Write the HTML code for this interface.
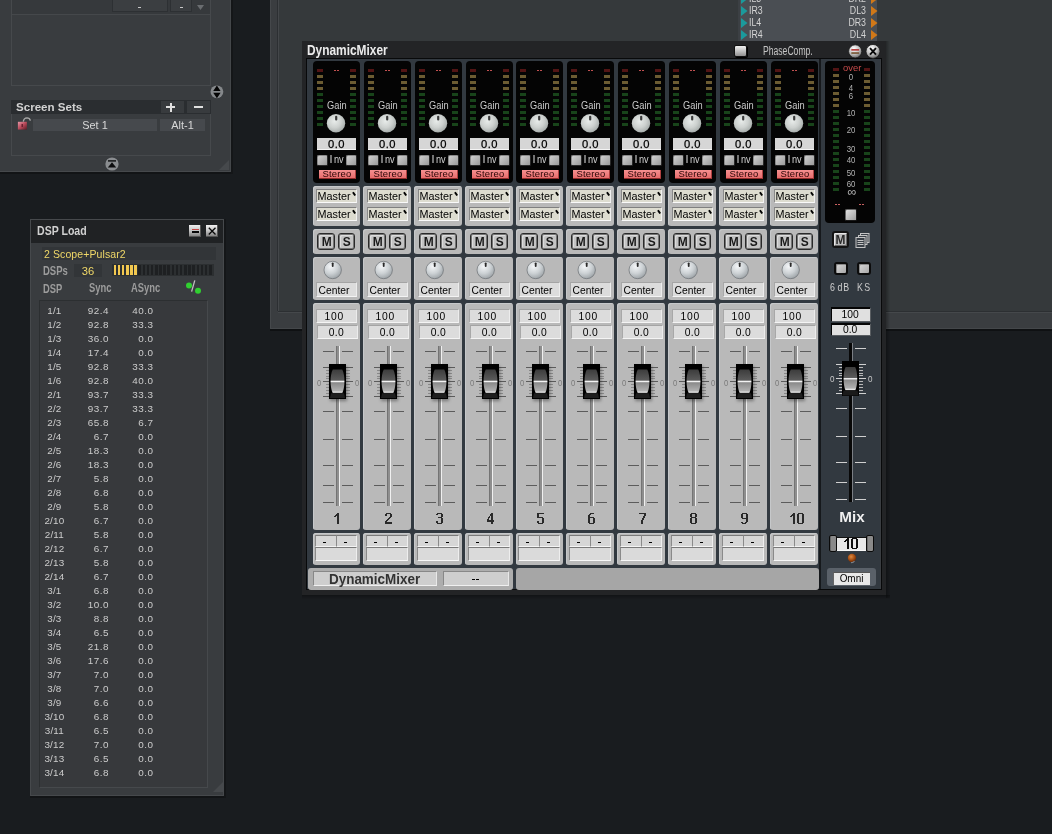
<!DOCTYPE html><html><head><meta charset="utf-8"><style>
*{margin:0;padding:0;box-sizing:border-box}
html,body{width:1052px;height:834px;overflow:hidden;background:#191c1f;font-family:"Liberation Sans",sans-serif}
div{position:absolute}
.t{white-space:nowrap;line-height:1}
</style></head><body><div style="left:0;top:0;width:1052px;height:834px;will-change:transform;overflow:hidden">
<div style="left:270px;top:0px;width:782px;height:330px;background:#35393b;"></div>
<div style="left:270px;top:0px;width:8px;height:329px;background:#3a3d40;"></div>
<div style="left:270px;top:0px;width:1px;height:329px;background:#45484b;"></div>
<div style="left:277px;top:0px;width:1px;height:311px;background:#2c2f32;"></div>
<div style="left:278px;top:0px;width:1px;height:312px;background:#44474a;"></div>
<div style="left:278px;top:311px;width:774px;height:1px;background:#2c2f32;"></div>
<div style="left:278px;top:312px;width:774px;height:1px;background:#45484b;"></div>
<div style="left:271px;top:313px;width:781px;height:15px;background:#3a3d40;"></div>
<div style="left:270px;top:328px;width:782px;height:1px;background:#44474a;"></div>
<div style="left:270px;top:329px;width:782px;height:2px;background:#0f1113;"></div>
<div style="left:738px;top:0px;width:139px;height:41px;background:#4a4e53;"></div>
<div style="left:738px;top:0px;width:2px;height:41px;background:#3c4044;"></div>
<svg style="position:absolute;left:740.5px;top:-6.35px;overflow:visible" width="7" height="10"><path d="M0 0 L6.5 5 L0 10Z" fill="#1b9a9c"/></svg>
<svg style="position:absolute;left:870.5px;top:-6.35px;overflow:visible" width="7" height="10"><path d="M0 0 L6.5 5 L0 10Z" fill="#d07818"/></svg>
<div class="t" style="left:748.5px;top:-6.00px;font-size:10px;color:#d4d4d4;transform:scaleX(0.88);transform-origin:left 50%;">IL3</div>
<div class="t" style="left:826px;top:-6.00px;font-size:10px;color:#d4d4d4;width:40px;text-align:right;transform:scaleX(0.88);transform-origin:right 50%;">DR2</div>
<svg style="position:absolute;left:740.5px;top:5.65px;overflow:visible" width="7" height="10"><path d="M0 0 L6.5 5 L0 10Z" fill="#1b9a9c"/></svg>
<svg style="position:absolute;left:870.5px;top:5.65px;overflow:visible" width="7" height="10"><path d="M0 0 L6.5 5 L0 10Z" fill="#d07818"/></svg>
<div class="t" style="left:748.5px;top:6.00px;font-size:10px;color:#d4d4d4;transform:scaleX(0.88);transform-origin:left 50%;">IR3</div>
<div class="t" style="left:826px;top:6.00px;font-size:10px;color:#d4d4d4;width:40px;text-align:right;transform:scaleX(0.88);transform-origin:right 50%;">DL3</div>
<svg style="position:absolute;left:740.5px;top:17.65px;overflow:visible" width="7" height="10"><path d="M0 0 L6.5 5 L0 10Z" fill="#1b9a9c"/></svg>
<svg style="position:absolute;left:870.5px;top:17.65px;overflow:visible" width="7" height="10"><path d="M0 0 L6.5 5 L0 10Z" fill="#d07818"/></svg>
<div class="t" style="left:748.5px;top:18.00px;font-size:10px;color:#d4d4d4;transform:scaleX(0.88);transform-origin:left 50%;">IL4</div>
<div class="t" style="left:826px;top:18.00px;font-size:10px;color:#d4d4d4;width:40px;text-align:right;transform:scaleX(0.88);transform-origin:right 50%;">DR3</div>
<svg style="position:absolute;left:740.5px;top:29.65px;overflow:visible" width="7" height="10"><path d="M0 0 L6.5 5 L0 10Z" fill="#1b9a9c"/></svg>
<svg style="position:absolute;left:870.5px;top:29.65px;overflow:visible" width="7" height="10"><path d="M0 0 L6.5 5 L0 10Z" fill="#d07818"/></svg>
<div class="t" style="left:748.5px;top:30.00px;font-size:10px;color:#d4d4d4;transform:scaleX(0.88);transform-origin:left 50%;">IR4</div>
<div class="t" style="left:826px;top:30.00px;font-size:10px;color:#d4d4d4;width:40px;text-align:right;transform:scaleX(0.88);transform-origin:right 50%;">DL4</div>
<div style="left:0px;top:0px;width:231px;height:172px;background:#393c3f;"></div>
<div style="left:0px;top:171px;width:231px;height:1px;background:#46494c;"></div>
<div style="left:230px;top:0px;width:1px;height:172px;background:#44474a;"></div>
<div style="left:0px;top:172px;width:233px;height:2px;background:#121416;"></div>
<div style="left:231px;top:0px;width:2px;height:174px;background:#141618;"></div>
<div style="left:11px;top:0px;width:1px;height:86px;background:#46494c;"></div>
<div style="left:210px;top:0px;width:1px;height:86px;background:#46494c;"></div>
<div style="left:11px;top:85px;width:200px;height:1px;background:#46494c;"></div>
<div style="left:12px;top:14px;width:198px;height:1px;background:#45484b;"></div>
<div style="left:12px;top:0px;width:198px;height:14px;background:#36393c;"></div>
<div style="left:112px;top:0px;width:56px;height:12px;background:#3b3e41;border:1px solid #2d3033;border-top:none;"></div>
<div style="left:138px;top:7px;width:3px;height:1px;background:#c8c8c8;"></div>
<div style="left:170px;top:0px;width:22px;height:12px;background:#3b3e41;border:1px solid #2d3033;border-top:none;"></div>
<div style="left:180px;top:7px;width:3px;height:1px;background:#c8c8c8;"></div>
<svg style="position:absolute;left:197px;top:5px;overflow:visible" width="8" height="5"><path d="M0 0 L7 0 L3.5 5Z" fill="#6a6d70"/></svg>
<svg style="position:absolute;left:210px;top:85px;overflow:visible" width="14" height="14"><circle cx="6.9" cy="6.8" r="6.4" fill="#85888b"/><path d="M3.2 5.9 L6.9 0.6 L10.6 5.9Z M3.2 7.7 L6.9 13.2 L10.6 7.7Z" fill="#050505"/></svg>
<div style="left:11px;top:100px;width:200px;height:14px;background:#2a2d30;"></div>
<div class="t" style="left:15.8px;top:102.00px;font-size:11.8px;color:#d2d2d2;font-weight:bold;transform:scaleX(0.98);transform-origin:left 50%;">Screen Sets</div>
<div style="left:161px;top:101px;width:23px;height:12px;background:#383b3e;"></div>
<div style="left:166px;top:106px;width:9px;height:2px;background:#e0e0e0;"></div>
<div style="left:169.5px;top:102.5px;width:2px;height:9px;background:#e0e0e0;"></div>
<div style="left:187px;top:101px;width:23px;height:12px;background:#383b3e;"></div>
<div style="left:194px;top:106px;width:9px;height:2px;background:#e0e0e0;"></div>
<div style="left:11px;top:114px;width:1px;height:42px;background:#46494c;"></div>
<div style="left:210px;top:114px;width:1px;height:42px;background:#46494c;"></div>
<div style="left:11px;top:155px;width:200px;height:1px;background:#46494c;"></div>
<div style="left:33px;top:119px;width:124px;height:12px;background:#46494d;"></div>
<div class="t" style="left:33px;top:120.00px;font-size:10.9px;color:#d8d8d8;width:124px;text-align:center;">Set 1</div>
<div style="left:160px;top:119px;width:45px;height:12px;background:#46494d;"></div>
<div class="t" style="left:160px;top:120.00px;font-size:10.9px;color:#d8d8d8;width:45px;text-align:center;">Alt-1</div>
<svg style="position:absolute;left:17px;top:116px;overflow:visible" width="15" height="15"><defs><linearGradient id="lk" x1="0" y1="0" x2="1" y2="1"><stop offset="0" stop-color="#e898a8"/><stop offset="0.5" stop-color="#b84a5a"/><stop offset="1" stop-color="#5a1a24"/></linearGradient></defs><path d="M6.3 5.6 Q6.8 2 10 1.9 Q12.6 2 13.4 4.6" fill="none" stroke="#a8a8a8" stroke-width="1.4"/><rect x="0.9" y="5.8" width="9" height="7.8" fill="url(#lk)"/><rect x="4.5" y="8" width="1.5" height="3" fill="#6a2030"/></svg>
<svg style="position:absolute;left:105px;top:157px;overflow:visible" width="14" height="14"><circle cx="7" cy="7" r="6.6" fill="#8a8d90"/><rect x="3" y="3.2" width="8" height="1.4" fill="#0c0d0e"/><path d="M2.8 10.5 L7 5.3 L11.2 10.5Z" fill="#0c0d0e"/></svg>
<svg style="position:absolute;left:219px;top:160px;overflow:visible" width="11" height="11"><path d="M10 0 L10 10 L0 10Z" fill="#46494c"/></svg>
<div style="left:30px;top:219px;width:194px;height:577px;background:#393c3f;border:1px solid #46494c;"></div>
<div style="left:31px;top:220px;width:192px;height:23px;background:#202224;"></div>
<div class="t" style="left:37.3px;top:225.00px;font-size:12px;color:#d0d0d0;font-weight:bold;transform:scaleX(0.88);transform-origin:left 50%;">DSP Load</div>
<div style="left:189px;top:225px;width:12.3px;height:12.3px;background:linear-gradient(#f0f0f0,#c8c8c8 45%,#7a7a7a);box-shadow:inset -1px -1px 0 #555;"></div>
<div style="left:192px;top:229px;width:7px;height:1.3px;background:#c84848;"></div>
<div style="left:192px;top:231.3px;width:7px;height:1.7px;background:#080808;"></div>
<div style="left:206px;top:225px;width:12.3px;height:12.3px;background:linear-gradient(#f0f0f0,#c8c8c8 45%,#7a7a7a);box-shadow:inset -1px -1px 0 #555;"></div>
<svg style="position:absolute;left:206px;top:225px;overflow:visible" width="13" height="12"><path d="M2.8 2.8 L9.5 9.5 M9.5 2.8 L2.8 9.5" stroke="#080808" stroke-width="1.3"/></svg>
<div style="left:42px;top:247px;width:174px;height:13px;background:#323538;"></div>
<div class="t" style="left:44.3px;top:249.00px;font-size:11.2px;color:#f0d868;transform:scaleX(0.94);transform-origin:left 50%;letter-spacing:0.1px;">2 Scope+Pulsar2</div>
<div class="t" style="left:42.7px;top:265.00px;font-size:12.2px;color:#9c9c9c;font-weight:bold;transform:scaleX(0.78);transform-origin:left 50%;">DSPs</div>
<div style="left:74px;top:264px;width:28px;height:13px;background:#323538;"></div>
<div class="t" style="left:74px;top:266.00px;font-size:11.2px;color:#f0d868;width:28px;text-align:center;">36</div>
<div style="left:112px;top:264px;width:102px;height:12px;background:#2c2f31;"></div>
<div style="left:113.5px;top:265px;width:2.6px;height:10px;background:#f2c850;"></div>
<div style="left:117.65px;top:265px;width:2.6px;height:10px;background:#f2c850;"></div>
<div style="left:121.8px;top:265px;width:2.6px;height:10px;background:#f2c850;"></div>
<div style="left:125.95px;top:265px;width:2.6px;height:10px;background:#f2c850;"></div>
<div style="left:130.1px;top:265px;width:2.6px;height:10px;background:#f2c850;"></div>
<div style="left:134.25px;top:265px;width:2.6px;height:10px;background:#f2c850;"></div>
<div style="left:138.4px;top:265px;width:2.6px;height:10px;background:#1e2022;"></div>
<div style="left:142.55px;top:265px;width:2.6px;height:10px;background:#1e2022;"></div>
<div style="left:146.7px;top:265px;width:2.6px;height:10px;background:#1e2022;"></div>
<div style="left:150.85px;top:265px;width:2.6px;height:10px;background:#1e2022;"></div>
<div style="left:155.0px;top:265px;width:2.6px;height:10px;background:#1e2022;"></div>
<div style="left:159.15px;top:265px;width:2.6px;height:10px;background:#1e2022;"></div>
<div style="left:163.3px;top:265px;width:2.6px;height:10px;background:#1e2022;"></div>
<div style="left:167.45px;top:265px;width:2.6px;height:10px;background:#1e2022;"></div>
<div style="left:171.60000000000002px;top:265px;width:2.6px;height:10px;background:#1e2022;"></div>
<div style="left:175.75px;top:265px;width:2.6px;height:10px;background:#1e2022;"></div>
<div style="left:179.9px;top:265px;width:2.6px;height:10px;background:#1e2022;"></div>
<div style="left:184.05px;top:265px;width:2.6px;height:10px;background:#1e2022;"></div>
<div style="left:188.2px;top:265px;width:2.6px;height:10px;background:#1e2022;"></div>
<div style="left:192.35000000000002px;top:265px;width:2.6px;height:10px;background:#1e2022;"></div>
<div style="left:196.5px;top:265px;width:2.6px;height:10px;background:#1e2022;"></div>
<div style="left:200.65px;top:265px;width:2.6px;height:10px;background:#1e2022;"></div>
<div style="left:204.8px;top:265px;width:2.6px;height:10px;background:#1e2022;"></div>
<div style="left:208.95px;top:265px;width:2.6px;height:10px;background:#1e2022;"></div>
<div class="t" style="left:42.7px;top:283.00px;font-size:12px;color:#9c9c9c;font-weight:bold;transform:scaleX(0.78);transform-origin:left 50%;">DSP</div>
<div class="t" style="left:88.8px;top:282.00px;font-size:12px;color:#9c9c9c;font-weight:bold;transform:scaleX(0.78);transform-origin:left 50%;">Sync</div>
<div class="t" style="left:131px;top:282.00px;font-size:12px;color:#9c9c9c;font-weight:bold;transform:scaleX(0.78);transform-origin:left 50%;">ASync</div>
<svg style="position:absolute;left:184px;top:278px;overflow:visible" width="18" height="16"><circle cx="5" cy="7.5" r="3" fill="#30d030"/><circle cx="14" cy="12.7" r="3" fill="#30d030"/><path d="M7.6 13.6 L10.8 2.4" stroke="#c0c0c0" stroke-width="1.3"/></svg>
<div style="left:39px;top:300px;width:169px;height:488px;background:#37393c;border:1px solid #2c2f31;border-right-color:#46494c;border-bottom-color:#46494c;"></div>
<div class="t" style="left:38.4px;top:306.00px;font-size:9.9px;color:#cccccc;width:32px;text-align:center;letter-spacing:0.2px;">1/1</div>
<div class="t" style="left:60px;top:306.00px;font-size:9.9px;color:#cccccc;width:49px;text-align:right;letter-spacing:0.5px;">92.4</div>
<div class="t" style="left:104px;top:306.00px;font-size:9.9px;color:#cccccc;width:49.5px;text-align:right;letter-spacing:0.5px;">40.0</div>
<div class="t" style="left:38.4px;top:320.00px;font-size:9.9px;color:#cccccc;width:32px;text-align:center;letter-spacing:0.2px;">1/2</div>
<div class="t" style="left:60px;top:320.00px;font-size:9.9px;color:#cccccc;width:49px;text-align:right;letter-spacing:0.5px;">92.8</div>
<div class="t" style="left:104px;top:320.00px;font-size:9.9px;color:#cccccc;width:49.5px;text-align:right;letter-spacing:0.5px;">33.3</div>
<div class="t" style="left:38.4px;top:334.00px;font-size:9.9px;color:#cccccc;width:32px;text-align:center;letter-spacing:0.2px;">1/3</div>
<div class="t" style="left:60px;top:334.00px;font-size:9.9px;color:#cccccc;width:49px;text-align:right;letter-spacing:0.5px;">36.0</div>
<div class="t" style="left:104px;top:334.00px;font-size:9.9px;color:#cccccc;width:49.5px;text-align:right;letter-spacing:0.5px;">0.0</div>
<div class="t" style="left:38.4px;top:348.00px;font-size:9.9px;color:#cccccc;width:32px;text-align:center;letter-spacing:0.2px;">1/4</div>
<div class="t" style="left:60px;top:348.00px;font-size:9.9px;color:#cccccc;width:49px;text-align:right;letter-spacing:0.5px;">17.4</div>
<div class="t" style="left:104px;top:348.00px;font-size:9.9px;color:#cccccc;width:49.5px;text-align:right;letter-spacing:0.5px;">0.0</div>
<div class="t" style="left:38.4px;top:362.00px;font-size:9.9px;color:#cccccc;width:32px;text-align:center;letter-spacing:0.2px;">1/5</div>
<div class="t" style="left:60px;top:362.00px;font-size:9.9px;color:#cccccc;width:49px;text-align:right;letter-spacing:0.5px;">92.8</div>
<div class="t" style="left:104px;top:362.00px;font-size:9.9px;color:#cccccc;width:49.5px;text-align:right;letter-spacing:0.5px;">33.3</div>
<div class="t" style="left:38.4px;top:376.00px;font-size:9.9px;color:#cccccc;width:32px;text-align:center;letter-spacing:0.2px;">1/6</div>
<div class="t" style="left:60px;top:376.00px;font-size:9.9px;color:#cccccc;width:49px;text-align:right;letter-spacing:0.5px;">92.8</div>
<div class="t" style="left:104px;top:376.00px;font-size:9.9px;color:#cccccc;width:49.5px;text-align:right;letter-spacing:0.5px;">40.0</div>
<div class="t" style="left:38.4px;top:390.00px;font-size:9.9px;color:#cccccc;width:32px;text-align:center;letter-spacing:0.2px;">2/1</div>
<div class="t" style="left:60px;top:390.00px;font-size:9.9px;color:#cccccc;width:49px;text-align:right;letter-spacing:0.5px;">93.7</div>
<div class="t" style="left:104px;top:390.00px;font-size:9.9px;color:#cccccc;width:49.5px;text-align:right;letter-spacing:0.5px;">33.3</div>
<div class="t" style="left:38.4px;top:404.00px;font-size:9.9px;color:#cccccc;width:32px;text-align:center;letter-spacing:0.2px;">2/2</div>
<div class="t" style="left:60px;top:404.00px;font-size:9.9px;color:#cccccc;width:49px;text-align:right;letter-spacing:0.5px;">93.7</div>
<div class="t" style="left:104px;top:404.00px;font-size:9.9px;color:#cccccc;width:49.5px;text-align:right;letter-spacing:0.5px;">33.3</div>
<div class="t" style="left:38.4px;top:418.00px;font-size:9.9px;color:#cccccc;width:32px;text-align:center;letter-spacing:0.2px;">2/3</div>
<div class="t" style="left:60px;top:418.00px;font-size:9.9px;color:#cccccc;width:49px;text-align:right;letter-spacing:0.5px;">65.8</div>
<div class="t" style="left:104px;top:418.00px;font-size:9.9px;color:#cccccc;width:49.5px;text-align:right;letter-spacing:0.5px;">6.7</div>
<div class="t" style="left:38.4px;top:432.00px;font-size:9.9px;color:#cccccc;width:32px;text-align:center;letter-spacing:0.2px;">2/4</div>
<div class="t" style="left:60px;top:432.00px;font-size:9.9px;color:#cccccc;width:49px;text-align:right;letter-spacing:0.5px;">6.7</div>
<div class="t" style="left:104px;top:432.00px;font-size:9.9px;color:#cccccc;width:49.5px;text-align:right;letter-spacing:0.5px;">0.0</div>
<div class="t" style="left:38.4px;top:446.00px;font-size:9.9px;color:#cccccc;width:32px;text-align:center;letter-spacing:0.2px;">2/5</div>
<div class="t" style="left:60px;top:446.00px;font-size:9.9px;color:#cccccc;width:49px;text-align:right;letter-spacing:0.5px;">18.3</div>
<div class="t" style="left:104px;top:446.00px;font-size:9.9px;color:#cccccc;width:49.5px;text-align:right;letter-spacing:0.5px;">0.0</div>
<div class="t" style="left:38.4px;top:460.00px;font-size:9.9px;color:#cccccc;width:32px;text-align:center;letter-spacing:0.2px;">2/6</div>
<div class="t" style="left:60px;top:460.00px;font-size:9.9px;color:#cccccc;width:49px;text-align:right;letter-spacing:0.5px;">18.3</div>
<div class="t" style="left:104px;top:460.00px;font-size:9.9px;color:#cccccc;width:49.5px;text-align:right;letter-spacing:0.5px;">0.0</div>
<div class="t" style="left:38.4px;top:474.00px;font-size:9.9px;color:#cccccc;width:32px;text-align:center;letter-spacing:0.2px;">2/7</div>
<div class="t" style="left:60px;top:474.00px;font-size:9.9px;color:#cccccc;width:49px;text-align:right;letter-spacing:0.5px;">5.8</div>
<div class="t" style="left:104px;top:474.00px;font-size:9.9px;color:#cccccc;width:49.5px;text-align:right;letter-spacing:0.5px;">0.0</div>
<div class="t" style="left:38.4px;top:488.00px;font-size:9.9px;color:#cccccc;width:32px;text-align:center;letter-spacing:0.2px;">2/8</div>
<div class="t" style="left:60px;top:488.00px;font-size:9.9px;color:#cccccc;width:49px;text-align:right;letter-spacing:0.5px;">6.8</div>
<div class="t" style="left:104px;top:488.00px;font-size:9.9px;color:#cccccc;width:49.5px;text-align:right;letter-spacing:0.5px;">0.0</div>
<div class="t" style="left:38.4px;top:502.00px;font-size:9.9px;color:#cccccc;width:32px;text-align:center;letter-spacing:0.2px;">2/9</div>
<div class="t" style="left:60px;top:502.00px;font-size:9.9px;color:#cccccc;width:49px;text-align:right;letter-spacing:0.5px;">5.8</div>
<div class="t" style="left:104px;top:502.00px;font-size:9.9px;color:#cccccc;width:49.5px;text-align:right;letter-spacing:0.5px;">0.0</div>
<div class="t" style="left:38.4px;top:516.00px;font-size:9.9px;color:#cccccc;width:32px;text-align:center;letter-spacing:0.2px;">2/10</div>
<div class="t" style="left:60px;top:516.00px;font-size:9.9px;color:#cccccc;width:49px;text-align:right;letter-spacing:0.5px;">6.7</div>
<div class="t" style="left:104px;top:516.00px;font-size:9.9px;color:#cccccc;width:49.5px;text-align:right;letter-spacing:0.5px;">0.0</div>
<div class="t" style="left:38.4px;top:530.00px;font-size:9.9px;color:#cccccc;width:32px;text-align:center;letter-spacing:0.2px;">2/11</div>
<div class="t" style="left:60px;top:530.00px;font-size:9.9px;color:#cccccc;width:49px;text-align:right;letter-spacing:0.5px;">5.8</div>
<div class="t" style="left:104px;top:530.00px;font-size:9.9px;color:#cccccc;width:49.5px;text-align:right;letter-spacing:0.5px;">0.0</div>
<div class="t" style="left:38.4px;top:544.00px;font-size:9.9px;color:#cccccc;width:32px;text-align:center;letter-spacing:0.2px;">2/12</div>
<div class="t" style="left:60px;top:544.00px;font-size:9.9px;color:#cccccc;width:49px;text-align:right;letter-spacing:0.5px;">6.7</div>
<div class="t" style="left:104px;top:544.00px;font-size:9.9px;color:#cccccc;width:49.5px;text-align:right;letter-spacing:0.5px;">0.0</div>
<div class="t" style="left:38.4px;top:558.00px;font-size:9.9px;color:#cccccc;width:32px;text-align:center;letter-spacing:0.2px;">2/13</div>
<div class="t" style="left:60px;top:558.00px;font-size:9.9px;color:#cccccc;width:49px;text-align:right;letter-spacing:0.5px;">5.8</div>
<div class="t" style="left:104px;top:558.00px;font-size:9.9px;color:#cccccc;width:49.5px;text-align:right;letter-spacing:0.5px;">0.0</div>
<div class="t" style="left:38.4px;top:572.00px;font-size:9.9px;color:#cccccc;width:32px;text-align:center;letter-spacing:0.2px;">2/14</div>
<div class="t" style="left:60px;top:572.00px;font-size:9.9px;color:#cccccc;width:49px;text-align:right;letter-spacing:0.5px;">6.7</div>
<div class="t" style="left:104px;top:572.00px;font-size:9.9px;color:#cccccc;width:49.5px;text-align:right;letter-spacing:0.5px;">0.0</div>
<div class="t" style="left:38.4px;top:586.00px;font-size:9.9px;color:#cccccc;width:32px;text-align:center;letter-spacing:0.2px;">3/1</div>
<div class="t" style="left:60px;top:586.00px;font-size:9.9px;color:#cccccc;width:49px;text-align:right;letter-spacing:0.5px;">6.8</div>
<div class="t" style="left:104px;top:586.00px;font-size:9.9px;color:#cccccc;width:49.5px;text-align:right;letter-spacing:0.5px;">0.0</div>
<div class="t" style="left:38.4px;top:600.00px;font-size:9.9px;color:#cccccc;width:32px;text-align:center;letter-spacing:0.2px;">3/2</div>
<div class="t" style="left:60px;top:600.00px;font-size:9.9px;color:#cccccc;width:49px;text-align:right;letter-spacing:0.5px;">10.0</div>
<div class="t" style="left:104px;top:600.00px;font-size:9.9px;color:#cccccc;width:49.5px;text-align:right;letter-spacing:0.5px;">0.0</div>
<div class="t" style="left:38.4px;top:614.00px;font-size:9.9px;color:#cccccc;width:32px;text-align:center;letter-spacing:0.2px;">3/3</div>
<div class="t" style="left:60px;top:614.00px;font-size:9.9px;color:#cccccc;width:49px;text-align:right;letter-spacing:0.5px;">8.8</div>
<div class="t" style="left:104px;top:614.00px;font-size:9.9px;color:#cccccc;width:49.5px;text-align:right;letter-spacing:0.5px;">0.0</div>
<div class="t" style="left:38.4px;top:628.00px;font-size:9.9px;color:#cccccc;width:32px;text-align:center;letter-spacing:0.2px;">3/4</div>
<div class="t" style="left:60px;top:628.00px;font-size:9.9px;color:#cccccc;width:49px;text-align:right;letter-spacing:0.5px;">6.5</div>
<div class="t" style="left:104px;top:628.00px;font-size:9.9px;color:#cccccc;width:49.5px;text-align:right;letter-spacing:0.5px;">0.0</div>
<div class="t" style="left:38.4px;top:642.00px;font-size:9.9px;color:#cccccc;width:32px;text-align:center;letter-spacing:0.2px;">3/5</div>
<div class="t" style="left:60px;top:642.00px;font-size:9.9px;color:#cccccc;width:49px;text-align:right;letter-spacing:0.5px;">21.8</div>
<div class="t" style="left:104px;top:642.00px;font-size:9.9px;color:#cccccc;width:49.5px;text-align:right;letter-spacing:0.5px;">0.0</div>
<div class="t" style="left:38.4px;top:656.00px;font-size:9.9px;color:#cccccc;width:32px;text-align:center;letter-spacing:0.2px;">3/6</div>
<div class="t" style="left:60px;top:656.00px;font-size:9.9px;color:#cccccc;width:49px;text-align:right;letter-spacing:0.5px;">17.6</div>
<div class="t" style="left:104px;top:656.00px;font-size:9.9px;color:#cccccc;width:49.5px;text-align:right;letter-spacing:0.5px;">0.0</div>
<div class="t" style="left:38.4px;top:670.00px;font-size:9.9px;color:#cccccc;width:32px;text-align:center;letter-spacing:0.2px;">3/7</div>
<div class="t" style="left:60px;top:670.00px;font-size:9.9px;color:#cccccc;width:49px;text-align:right;letter-spacing:0.5px;">7.0</div>
<div class="t" style="left:104px;top:670.00px;font-size:9.9px;color:#cccccc;width:49.5px;text-align:right;letter-spacing:0.5px;">0.0</div>
<div class="t" style="left:38.4px;top:684.00px;font-size:9.9px;color:#cccccc;width:32px;text-align:center;letter-spacing:0.2px;">3/8</div>
<div class="t" style="left:60px;top:684.00px;font-size:9.9px;color:#cccccc;width:49px;text-align:right;letter-spacing:0.5px;">7.0</div>
<div class="t" style="left:104px;top:684.00px;font-size:9.9px;color:#cccccc;width:49.5px;text-align:right;letter-spacing:0.5px;">0.0</div>
<div class="t" style="left:38.4px;top:698.00px;font-size:9.9px;color:#cccccc;width:32px;text-align:center;letter-spacing:0.2px;">3/9</div>
<div class="t" style="left:60px;top:698.00px;font-size:9.9px;color:#cccccc;width:49px;text-align:right;letter-spacing:0.5px;">6.6</div>
<div class="t" style="left:104px;top:698.00px;font-size:9.9px;color:#cccccc;width:49.5px;text-align:right;letter-spacing:0.5px;">0.0</div>
<div class="t" style="left:38.4px;top:712.00px;font-size:9.9px;color:#cccccc;width:32px;text-align:center;letter-spacing:0.2px;">3/10</div>
<div class="t" style="left:60px;top:712.00px;font-size:9.9px;color:#cccccc;width:49px;text-align:right;letter-spacing:0.5px;">6.8</div>
<div class="t" style="left:104px;top:712.00px;font-size:9.9px;color:#cccccc;width:49.5px;text-align:right;letter-spacing:0.5px;">0.0</div>
<div class="t" style="left:38.4px;top:726.00px;font-size:9.9px;color:#cccccc;width:32px;text-align:center;letter-spacing:0.2px;">3/11</div>
<div class="t" style="left:60px;top:726.00px;font-size:9.9px;color:#cccccc;width:49px;text-align:right;letter-spacing:0.5px;">6.5</div>
<div class="t" style="left:104px;top:726.00px;font-size:9.9px;color:#cccccc;width:49.5px;text-align:right;letter-spacing:0.5px;">0.0</div>
<div class="t" style="left:38.4px;top:740.00px;font-size:9.9px;color:#cccccc;width:32px;text-align:center;letter-spacing:0.2px;">3/12</div>
<div class="t" style="left:60px;top:740.00px;font-size:9.9px;color:#cccccc;width:49px;text-align:right;letter-spacing:0.5px;">7.0</div>
<div class="t" style="left:104px;top:740.00px;font-size:9.9px;color:#cccccc;width:49.5px;text-align:right;letter-spacing:0.5px;">0.0</div>
<div class="t" style="left:38.4px;top:754.00px;font-size:9.9px;color:#cccccc;width:32px;text-align:center;letter-spacing:0.2px;">3/13</div>
<div class="t" style="left:60px;top:754.00px;font-size:9.9px;color:#cccccc;width:49px;text-align:right;letter-spacing:0.5px;">6.5</div>
<div class="t" style="left:104px;top:754.00px;font-size:9.9px;color:#cccccc;width:49.5px;text-align:right;letter-spacing:0.5px;">0.0</div>
<div class="t" style="left:38.4px;top:768.00px;font-size:9.9px;color:#cccccc;width:32px;text-align:center;letter-spacing:0.2px;">3/14</div>
<div class="t" style="left:60px;top:768.00px;font-size:9.9px;color:#cccccc;width:49px;text-align:right;letter-spacing:0.5px;">6.8</div>
<div class="t" style="left:104px;top:768.00px;font-size:9.9px;color:#cccccc;width:49.5px;text-align:right;letter-spacing:0.5px;">0.0</div>
<svg style="position:absolute;left:213px;top:782px;overflow:visible" width="11" height="11"><path d="M10 0 L10 10 L0 10Z" fill="#46494c"/></svg>
<div style="left:30px;top:796px;width:196px;height:2px;background:#121416;"></div>
<div style="left:224px;top:219px;width:2px;height:579px;background:#141618;"></div>
<div style="left:302px;top:41px;width:584px;height:554px;background:#232426;"></div>
<div style="left:886px;top:41px;width:4px;height:557px;background:linear-gradient(90deg,rgba(0,0,0,0.3),rgba(0,0,0,0));"></div>
<div style="left:302px;top:595px;width:588px;height:4px;background:linear-gradient(rgba(0,0,0,0.3),rgba(0,0,0,0));"></div>
<div class="t" style="left:306.9px;top:43.00px;font-size:14.6px;color:#ececec;font-weight:bold;transform:scaleX(0.815);transform-origin:left 50%;">DynamicMixer</div>
<div style="left:306px;top:58px;width:576px;height:532px;background:#08090a;"></div>
<div style="left:307px;top:59px;width:574px;height:530px;background:#323940;"></div>
<div style="left:880px;top:59px;width:1px;height:530px;background:#3a3d41;"></div>
<div style="left:734px;top:45px;width:13px;height:12px;background:linear-gradient(#f0f0f0,#b8b8b8 60%,#909090);border:1px solid #111;border-radius:2px;box-shadow:1px 1px 0 #000;"></div>
<div class="t" style="left:762.8px;top:45.00px;font-size:12.3px;color:#c4c4c4;transform:scaleX(0.7);transform-origin:left 50%;">PhaseComp.</div>
<svg style="position:absolute;left:848px;top:44px;overflow:visible" width="34" height="15"><defs><radialGradient id="kb" cx="0.4" cy="0.3" r="0.75"><stop offset="0" stop-color="#ffffff"/><stop offset="0.55" stop-color="#c0c0c0"/><stop offset="1" stop-color="#606060"/></radialGradient></defs><circle cx="7.2" cy="7.4" r="6.6" fill="url(#kb)" stroke="#1a1a1a" stroke-width="0.8"/><rect x="3.3" y="5" width="7.8" height="1.7" fill="#b84040"/><rect x="3.3" y="8.2" width="7.8" height="1.7" fill="#7a5a3a"/><circle cx="25" cy="7.4" r="7" fill="url(#kb)" stroke="#1a1a1a" stroke-width="0.8"/><path d="M22 4.2 L28 10.6 M28 4.2 L22 10.6" stroke="#0a0a0a" stroke-width="1.9"/></svg></svg>
<svg width="0" height="0" style="position:absolute"><defs>
<radialGradient id="knob" cx="0.42" cy="0.38" r="0.72"><stop offset="0" stop-color="#e8ecea"/><stop offset="0.5" stop-color="#cdd1cf"/><stop offset="0.85" stop-color="#aab0ae"/><stop offset="1" stop-color="#6a6e6e"/></radialGradient>
<radialGradient id="knob2" cx="0.38" cy="0.3" r="0.8"><stop offset="0" stop-color="#f4f6f8"/><stop offset="0.5" stop-color="#cdd2d5"/><stop offset="0.85" stop-color="#a4aaae"/><stop offset="1" stop-color="#8a9094"/></radialGradient>
<linearGradient id="cap" x1="0" y1="0" x2="0" y2="1"><stop offset="0" stop-color="#3c3c3c"/><stop offset="0.45" stop-color="#5a5a5a"/><stop offset="0.5" stop-color="#ffffff"/><stop offset="0.56" stop-color="#8a8a8a"/><stop offset="0.9" stop-color="#b0b0b0"/><stop offset="0.96" stop-color="#e8e8e8"/><stop offset="1" stop-color="#555"/></linearGradient>
</defs></svg>
<div style="left:313px;top:61px;width:47px;height:122px;background:#040404;border-radius:4px;"></div>
<div style="left:317px;top:69px;width:6px;height:3px;background:#521414;"></div>
<div style="left:350px;top:69px;width:6px;height:3px;background:#521414;"></div>
<div style="left:317px;top:75px;width:6px;height:3px;background:#6c5c32;"></div>
<div style="left:350px;top:75px;width:6px;height:3px;background:#6c5c32;"></div>
<div style="left:317px;top:81px;width:6px;height:3px;background:#6c5c32;"></div>
<div style="left:350px;top:81px;width:6px;height:3px;background:#6c5c32;"></div>
<div style="left:317px;top:87px;width:6px;height:3px;background:#6c5c32;"></div>
<div style="left:350px;top:87px;width:6px;height:3px;background:#6c5c32;"></div>
<div style="left:317px;top:93px;width:6px;height:3px;background:#18441a;"></div>
<div style="left:350px;top:93px;width:6px;height:3px;background:#18441a;"></div>
<div style="left:317px;top:99px;width:6px;height:3px;background:#18441a;"></div>
<div style="left:350px;top:99px;width:6px;height:3px;background:#18441a;"></div>
<div style="left:317px;top:105px;width:6px;height:3px;background:#18441a;"></div>
<div style="left:350px;top:105px;width:6px;height:3px;background:#18441a;"></div>
<div style="left:317px;top:111px;width:6px;height:3px;background:#18441a;"></div>
<div style="left:350px;top:111px;width:6px;height:3px;background:#18441a;"></div>
<div style="left:317px;top:117px;width:6px;height:3px;background:#18441a;"></div>
<div style="left:350px;top:117px;width:6px;height:3px;background:#18441a;"></div>
<div style="left:317px;top:123px;width:6px;height:3px;background:#18441a;"></div>
<div style="left:350px;top:123px;width:6px;height:3px;background:#18441a;"></div>
<div style="left:334px;top:70px;width:2px;height:1px;background:#c05050;"></div>
<div style="left:337px;top:70px;width:2px;height:1px;background:#c05050;"></div>
<div class="t" style="left:327px;top:100.00px;font-size:10.8px;color:#cacaca;transform:scaleX(0.86);transform-origin:left 50%;">Gain</div>
<svg style="position:absolute;left:326px;top:114px;overflow:visible" width="20" height="20"><circle cx="10" cy="9.3" r="9.2" fill="url(#knob)"/><path d="M10.2 2.8 V5.4" stroke="#3a3a3a" stroke-width="2.2" stroke-linecap="round"/></svg>
<div style="left:317px;top:138px;width:39px;height:12px;background:#d6d6d6;border-bottom:1px solid #f4f4f4;"></div>
<div class="t" style="left:317px;top:139.00px;font-size:11.2px;color:#000;width:39px;text-align:center;letter-spacing:0.4px;-webkit-text-stroke:0.25px #000;">0.0</div>
<div style="left:317.3px;top:155px;width:11px;height:11px;background:linear-gradient(135deg,#cfcfcf,#9a9a9a);border:1px solid #2a2a2a;border-top-color:#8a8a8a;border-left-color:#8a8a8a;border-radius:2px;"></div>
<div style="left:346.2px;top:155px;width:11px;height:11px;background:linear-gradient(135deg,#cfcfcf,#9a9a9a);border:1px solid #2a2a2a;border-top-color:#8a8a8a;border-left-color:#8a8a8a;border-radius:2px;"></div>
<div class="t" style="left:329.6px;top:154.00px;font-size:10.8px;color:#d4d4d4;">I</div>
<div class="t" style="left:334px;top:154.00px;font-size:10.8px;color:#d4d4d4;transform:scaleX(0.85);transform-origin:left 50%;">nv</div>
<div style="left:319px;top:170px;width:36.5px;height:9.3px;background:linear-gradient(#f59090,#e86c6c);border-bottom:1px solid #902a2a;border-right:1px solid #b04040;"></div>
<div class="t" style="left:319px;top:170.00px;font-size:8.6px;color:#2a0606;width:36px;text-align:center;transform:scaleX(1.1);transform-origin:center 50%;letter-spacing:0.2px;">Stereo</div>
<div style="left:313px;top:186px;width:47px;height:40px;background:#b9b9b9;border-radius:3px;box-shadow:inset 1px 1px 0 #c6c8ca;"></div>
<div style="left:316px;top:189px;width:41px;height:14px;background:#dddcd0;border-top:1px solid #808080;border-left:1px solid #8a8a8a;border-bottom:1px solid #fafafa;border-right:1px solid #f0f0f0;"></div>
<div class="t" style="left:317.5px;top:191.00px;font-size:10.8px;color:#000;">Master</div>
<div style="left:352.6px;top:192.3px;width:1.6px;height:3.6px;background:#000;transform:rotate(-35deg);"></div>
<div style="left:316px;top:207px;width:41px;height:14px;background:#dddcd0;border-top:1px solid #808080;border-left:1px solid #8a8a8a;border-bottom:1px solid #fafafa;border-right:1px solid #f0f0f0;"></div>
<div class="t" style="left:317.5px;top:209.00px;font-size:10.8px;color:#000;">Master</div>
<div style="left:352.6px;top:210.3px;width:1.6px;height:3.6px;background:#000;transform:rotate(-35deg);"></div>
<div style="left:313px;top:229px;width:47px;height:25px;background:#b9b9b9;border-radius:3px;box-shadow:inset 1px 1px 0 #c6c8ca;"></div>
<div style="left:317.3px;top:233px;width:17.3px;height:17px;background:#c4c4c4;border:1px solid #2a2a2a;border-radius:3px;box-shadow:inset 0 0 0 1px #747474, inset 2px 2px 0 #dcdcdc;"></div>
<div class="t" style="left:317.6px;top:235.00px;font-size:13px;color:#1a1a1a;font-weight:bold;width:17.3px;text-align:center;transform:scaleX(0.92);transform-origin:center 50%;">M</div>
<div style="left:337.5px;top:233px;width:17.3px;height:17px;background:#c4c4c4;border:1px solid #2a2a2a;border-radius:3px;box-shadow:inset 0 0 0 1px #747474, inset 2px 2px 0 #dcdcdc;"></div>
<div class="t" style="left:337.8px;top:235.00px;font-size:13px;color:#1a1a1a;font-weight:bold;width:17.3px;text-align:center;transform:scaleX(0.92);transform-origin:center 50%;">S</div>
<div style="left:313px;top:257px;width:47px;height:43px;background:#b9b9b9;border-radius:3px;box-shadow:inset 1px 1px 0 #c6c8ca;"></div>
<svg style="position:absolute;left:324.3px;top:260.5px;overflow:visible" width="19" height="19"><circle cx="8.7" cy="9" r="8.7" fill="url(#knob2)" stroke="#6c7074" stroke-width="0.7"/><path d="M8.7 2.3 V5" stroke="#2a2a2a" stroke-width="1.8" stroke-linecap="round"/></svg>
<div style="left:315.6px;top:282px;width:41.4px;height:15px;background:#dcdcdc;border-top:1px solid #a4a4a4;border-left:1px solid #a8a8a8;border-bottom:1px solid #f4f4f4;border-right:1px solid #ececec;"></div>
<div class="t" style="left:315px;top:285.00px;font-size:10.8px;color:#000;width:38px;text-align:center;transform:scaleX(0.95);transform-origin:center 50%;">Center</div>
<div style="left:313px;top:303.3px;width:47px;height:226.3px;background:#b9b9b9;border-radius:3px;box-shadow:inset 1px 1px 0 #c6c8ca;"></div>
<div style="left:315.5px;top:309px;width:41px;height:14px;background:#dcdcdc;border-top:1px solid #a4a4a4;border-left:1px solid #a8a8a8;border-bottom:1px solid #f4f4f4;border-right:1px solid #ececec;"></div>
<div class="t" style="left:303px;top:312.00px;font-size:10.3px;color:#000;width:41px;text-align:right;letter-spacing:0.8px;">100</div>
<div style="left:316.5px;top:325px;width:41px;height:14px;background:#dcdcdc;border-top:1px solid #a4a4a4;border-left:1px solid #a8a8a8;border-bottom:1px solid #f4f4f4;border-right:1px solid #ececec;"></div>
<div class="t" style="left:303px;top:328.00px;font-size:10.3px;color:#000;width:41px;text-align:right;letter-spacing:0.3px;">0.0</div>
<div style="left:323px;top:351px;width:11px;height:1px;background:#5c5c5c;"></div>
<div style="left:342px;top:351px;width:11px;height:1px;background:#5c5c5c;"></div>
<div style="left:323px;top:367px;width:11px;height:1px;background:#5c5c5c;"></div>
<div style="left:342px;top:367px;width:11px;height:1px;background:#5c5c5c;"></div>
<div style="left:323px;top:381px;width:11px;height:1px;background:#5c5c5c;"></div>
<div style="left:342px;top:381px;width:11px;height:1px;background:#5c5c5c;"></div>
<div style="left:323px;top:396px;width:11px;height:1px;background:#5c5c5c;"></div>
<div style="left:342px;top:396px;width:11px;height:1px;background:#5c5c5c;"></div>
<div style="left:323px;top:411px;width:11px;height:1px;background:#5c5c5c;"></div>
<div style="left:342px;top:411px;width:11px;height:1px;background:#5c5c5c;"></div>
<div style="left:323px;top:439px;width:11px;height:1px;background:#5c5c5c;"></div>
<div style="left:342px;top:439px;width:11px;height:1px;background:#5c5c5c;"></div>
<div style="left:323px;top:465px;width:11px;height:1px;background:#5c5c5c;"></div>
<div style="left:342px;top:465px;width:11px;height:1px;background:#5c5c5c;"></div>
<div style="left:323px;top:485px;width:11px;height:1px;background:#5c5c5c;"></div>
<div style="left:342px;top:485px;width:11px;height:1px;background:#5c5c5c;"></div>
<div style="left:323px;top:502px;width:11px;height:1px;background:#5c5c5c;"></div>
<div style="left:342px;top:502px;width:11px;height:1px;background:#5c5c5c;"></div>
<div style="left:325.8px;top:370px;width:8px;height:1px;background:#8a8a8a;"></div>
<div style="left:342px;top:370px;width:8px;height:1px;background:#8a8a8a;"></div>
<div style="left:325.8px;top:373px;width:8px;height:1px;background:#8a8a8a;"></div>
<div style="left:342px;top:373px;width:8px;height:1px;background:#8a8a8a;"></div>
<div style="left:325.8px;top:376px;width:8px;height:1px;background:#8a8a8a;"></div>
<div style="left:342px;top:376px;width:8px;height:1px;background:#8a8a8a;"></div>
<div style="left:325.8px;top:378px;width:8px;height:1px;background:#8a8a8a;"></div>
<div style="left:342px;top:378px;width:8px;height:1px;background:#8a8a8a;"></div>
<div style="left:325.8px;top:384px;width:8px;height:1px;background:#8a8a8a;"></div>
<div style="left:342px;top:384px;width:8px;height:1px;background:#8a8a8a;"></div>
<div style="left:325.8px;top:387px;width:8px;height:1px;background:#8a8a8a;"></div>
<div style="left:342px;top:387px;width:8px;height:1px;background:#8a8a8a;"></div>
<div style="left:325.8px;top:390px;width:8px;height:1px;background:#8a8a8a;"></div>
<div style="left:342px;top:390px;width:8px;height:1px;background:#8a8a8a;"></div>
<div style="left:325.8px;top:393px;width:8px;height:1px;background:#8a8a8a;"></div>
<div style="left:342px;top:393px;width:8px;height:1px;background:#8a8a8a;"></div>
<div class="t" style="left:316.8px;top:378.00px;font-size:9.5px;color:#7a7a7a;transform:scaleX(0.8);transform-origin:left 50%;">0</div>
<div class="t" style="left:355px;top:378.00px;font-size:9.5px;color:#7a7a7a;transform:scaleX(0.8);transform-origin:left 50%;">0</div>
<div style="left:336px;top:346px;width:1px;height:160px;background:#747474;"></div>
<div style="left:337px;top:346px;width:2px;height:160px;background:#8e8e8e;"></div>
<div style="left:339px;top:346px;width:1px;height:160px;background:#f0f0f0;"></div>
<div style="left:329.1px;top:364.1px;width:16.8px;height:34.7px;background:#000;box-shadow:1px 2px 3px rgba(0,0,0,0.35);"></div>
<svg style="position:absolute;left:329.1px;top:364.1px;overflow:visible" width="17" height="35"><path d="M3.8 5.5 H13.2 C16.2 11 16.2 23.5 13.2 29.2 H3.8 C0.8 23.5 0.8 11 3.8 5.5Z" fill="url(#cap)"/><path d="M2 29.2 H15 L16 34 H1Z" fill="#1e1e1e"/></svg>
<svg style="position:absolute;left:334px;top:513px" width="7" height="11" shape-rendering="crispEdges"><path d="M3 0h2v1h-2zM2 1h3v1h-3zM1 2h4v1h-4zM0 3h2v1h-2zM3 3h2v1h-2zM3 4h2v1h-2zM3 5h2v1h-2zM3 6h2v1h-2zM3 7h2v1h-2zM3 8h2v1h-2zM3 9h2v1h-2zM3 10h2v1h-2z" fill="#2a2a2a"/></svg>
<div style="left:313px;top:533px;width:47px;height:31.5px;background:#b9b9b9;border-radius:3px;box-shadow:inset 1px 1px 0 #c6c8ca;"></div>
<div style="left:315px;top:535px;width:21px;height:12px;background:#d6d6d6;border-top:1px solid #7a7a7a;border-left:1px solid #8a8a8a;border-bottom:1px solid #f4f4f4;"></div>
<div style="left:323px;top:542px;width:3px;height:1px;background:#000;"></div>
<div style="left:336px;top:535px;width:21px;height:12px;background:#d6d6d6;border-top:1px solid #7a7a7a;border-left:1px solid #8a8a8a;border-bottom:1px solid #f4f4f4;border-right:1px solid #eee;"></div>
<div style="left:344px;top:542px;width:3px;height:1px;background:#000;"></div>
<div style="left:315px;top:547px;width:42px;height:14px;background:#dadada;border-top:1px solid #7a7a7a;border-left:1px solid #8a8a8a;border-bottom:1px solid #f8f8f8;border-right:1px solid #eee;"></div>
<div style="left:364px;top:61px;width:47px;height:122px;background:#040404;border-radius:4px;"></div>
<div style="left:368px;top:69px;width:6px;height:3px;background:#521414;"></div>
<div style="left:401px;top:69px;width:6px;height:3px;background:#521414;"></div>
<div style="left:368px;top:75px;width:6px;height:3px;background:#6c5c32;"></div>
<div style="left:401px;top:75px;width:6px;height:3px;background:#6c5c32;"></div>
<div style="left:368px;top:81px;width:6px;height:3px;background:#6c5c32;"></div>
<div style="left:401px;top:81px;width:6px;height:3px;background:#6c5c32;"></div>
<div style="left:368px;top:87px;width:6px;height:3px;background:#6c5c32;"></div>
<div style="left:401px;top:87px;width:6px;height:3px;background:#6c5c32;"></div>
<div style="left:368px;top:93px;width:6px;height:3px;background:#18441a;"></div>
<div style="left:401px;top:93px;width:6px;height:3px;background:#18441a;"></div>
<div style="left:368px;top:99px;width:6px;height:3px;background:#18441a;"></div>
<div style="left:401px;top:99px;width:6px;height:3px;background:#18441a;"></div>
<div style="left:368px;top:105px;width:6px;height:3px;background:#18441a;"></div>
<div style="left:401px;top:105px;width:6px;height:3px;background:#18441a;"></div>
<div style="left:368px;top:111px;width:6px;height:3px;background:#18441a;"></div>
<div style="left:401px;top:111px;width:6px;height:3px;background:#18441a;"></div>
<div style="left:368px;top:117px;width:6px;height:3px;background:#18441a;"></div>
<div style="left:401px;top:117px;width:6px;height:3px;background:#18441a;"></div>
<div style="left:368px;top:123px;width:6px;height:3px;background:#18441a;"></div>
<div style="left:401px;top:123px;width:6px;height:3px;background:#18441a;"></div>
<div style="left:385px;top:70px;width:2px;height:1px;background:#c05050;"></div>
<div style="left:388px;top:70px;width:2px;height:1px;background:#c05050;"></div>
<div class="t" style="left:378px;top:100.00px;font-size:10.8px;color:#cacaca;transform:scaleX(0.86);transform-origin:left 50%;">Gain</div>
<svg style="position:absolute;left:377px;top:114px;overflow:visible" width="20" height="20"><circle cx="10" cy="9.3" r="9.2" fill="url(#knob)"/><path d="M10.2 2.8 V5.4" stroke="#3a3a3a" stroke-width="2.2" stroke-linecap="round"/></svg>
<div style="left:368px;top:138px;width:39px;height:12px;background:#d6d6d6;border-bottom:1px solid #f4f4f4;"></div>
<div class="t" style="left:368px;top:139.00px;font-size:11.2px;color:#000;width:39px;text-align:center;letter-spacing:0.4px;-webkit-text-stroke:0.25px #000;">0.0</div>
<div style="left:368.3px;top:155px;width:11px;height:11px;background:linear-gradient(135deg,#cfcfcf,#9a9a9a);border:1px solid #2a2a2a;border-top-color:#8a8a8a;border-left-color:#8a8a8a;border-radius:2px;"></div>
<div style="left:397.2px;top:155px;width:11px;height:11px;background:linear-gradient(135deg,#cfcfcf,#9a9a9a);border:1px solid #2a2a2a;border-top-color:#8a8a8a;border-left-color:#8a8a8a;border-radius:2px;"></div>
<div class="t" style="left:380.6px;top:154.00px;font-size:10.8px;color:#d4d4d4;">I</div>
<div class="t" style="left:385px;top:154.00px;font-size:10.8px;color:#d4d4d4;transform:scaleX(0.85);transform-origin:left 50%;">nv</div>
<div style="left:370px;top:170px;width:36.5px;height:9.3px;background:linear-gradient(#f59090,#e86c6c);border-bottom:1px solid #902a2a;border-right:1px solid #b04040;"></div>
<div class="t" style="left:370px;top:170.00px;font-size:8.6px;color:#2a0606;width:36px;text-align:center;transform:scaleX(1.1);transform-origin:center 50%;letter-spacing:0.2px;">Stereo</div>
<div style="left:363px;top:186px;width:48px;height:40px;background:#b9b9b9;border-radius:3px;box-shadow:inset 1px 1px 0 #c6c8ca;"></div>
<div style="left:367px;top:189px;width:41px;height:14px;background:#dddcd0;border-top:1px solid #808080;border-left:1px solid #8a8a8a;border-bottom:1px solid #fafafa;border-right:1px solid #f0f0f0;"></div>
<div class="t" style="left:368.5px;top:191.00px;font-size:10.8px;color:#000;">Master</div>
<div style="left:403.6px;top:192.3px;width:1.6px;height:3.6px;background:#000;transform:rotate(-35deg);"></div>
<div style="left:367px;top:207px;width:41px;height:14px;background:#dddcd0;border-top:1px solid #808080;border-left:1px solid #8a8a8a;border-bottom:1px solid #fafafa;border-right:1px solid #f0f0f0;"></div>
<div class="t" style="left:368.5px;top:209.00px;font-size:10.8px;color:#000;">Master</div>
<div style="left:403.6px;top:210.3px;width:1.6px;height:3.6px;background:#000;transform:rotate(-35deg);"></div>
<div style="left:363px;top:229px;width:48px;height:25px;background:#b9b9b9;border-radius:3px;box-shadow:inset 1px 1px 0 #c6c8ca;"></div>
<div style="left:368.3px;top:233px;width:17.3px;height:17px;background:#c4c4c4;border:1px solid #2a2a2a;border-radius:3px;box-shadow:inset 0 0 0 1px #747474, inset 2px 2px 0 #dcdcdc;"></div>
<div class="t" style="left:368.6px;top:235.00px;font-size:13px;color:#1a1a1a;font-weight:bold;width:17.3px;text-align:center;transform:scaleX(0.92);transform-origin:center 50%;">M</div>
<div style="left:388.5px;top:233px;width:17.3px;height:17px;background:#c4c4c4;border:1px solid #2a2a2a;border-radius:3px;box-shadow:inset 0 0 0 1px #747474, inset 2px 2px 0 #dcdcdc;"></div>
<div class="t" style="left:388.8px;top:235.00px;font-size:13px;color:#1a1a1a;font-weight:bold;width:17.3px;text-align:center;transform:scaleX(0.92);transform-origin:center 50%;">S</div>
<div style="left:363px;top:257px;width:48px;height:43px;background:#b9b9b9;border-radius:3px;box-shadow:inset 1px 1px 0 #c6c8ca;"></div>
<svg style="position:absolute;left:375.3px;top:260.5px;overflow:visible" width="19" height="19"><circle cx="8.7" cy="9" r="8.7" fill="url(#knob2)" stroke="#6c7074" stroke-width="0.7"/><path d="M8.7 2.3 V5" stroke="#2a2a2a" stroke-width="1.8" stroke-linecap="round"/></svg>
<div style="left:366.6px;top:282px;width:41.4px;height:15px;background:#dcdcdc;border-top:1px solid #a4a4a4;border-left:1px solid #a8a8a8;border-bottom:1px solid #f4f4f4;border-right:1px solid #ececec;"></div>
<div class="t" style="left:366px;top:285.00px;font-size:10.8px;color:#000;width:38px;text-align:center;transform:scaleX(0.95);transform-origin:center 50%;">Center</div>
<div style="left:363px;top:303.3px;width:48px;height:226.3px;background:#b9b9b9;border-radius:3px;box-shadow:inset 1px 1px 0 #c6c8ca;"></div>
<div style="left:366.5px;top:309px;width:41px;height:14px;background:#dcdcdc;border-top:1px solid #a4a4a4;border-left:1px solid #a8a8a8;border-bottom:1px solid #f4f4f4;border-right:1px solid #ececec;"></div>
<div class="t" style="left:354px;top:312.00px;font-size:10.3px;color:#000;width:41px;text-align:right;letter-spacing:0.8px;">100</div>
<div style="left:367.5px;top:325px;width:41px;height:14px;background:#dcdcdc;border-top:1px solid #a4a4a4;border-left:1px solid #a8a8a8;border-bottom:1px solid #f4f4f4;border-right:1px solid #ececec;"></div>
<div class="t" style="left:354px;top:328.00px;font-size:10.3px;color:#000;width:41px;text-align:right;letter-spacing:0.3px;">0.0</div>
<div style="left:374px;top:351px;width:11px;height:1px;background:#5c5c5c;"></div>
<div style="left:393px;top:351px;width:11px;height:1px;background:#5c5c5c;"></div>
<div style="left:374px;top:367px;width:11px;height:1px;background:#5c5c5c;"></div>
<div style="left:393px;top:367px;width:11px;height:1px;background:#5c5c5c;"></div>
<div style="left:374px;top:381px;width:11px;height:1px;background:#5c5c5c;"></div>
<div style="left:393px;top:381px;width:11px;height:1px;background:#5c5c5c;"></div>
<div style="left:374px;top:396px;width:11px;height:1px;background:#5c5c5c;"></div>
<div style="left:393px;top:396px;width:11px;height:1px;background:#5c5c5c;"></div>
<div style="left:374px;top:411px;width:11px;height:1px;background:#5c5c5c;"></div>
<div style="left:393px;top:411px;width:11px;height:1px;background:#5c5c5c;"></div>
<div style="left:374px;top:439px;width:11px;height:1px;background:#5c5c5c;"></div>
<div style="left:393px;top:439px;width:11px;height:1px;background:#5c5c5c;"></div>
<div style="left:374px;top:465px;width:11px;height:1px;background:#5c5c5c;"></div>
<div style="left:393px;top:465px;width:11px;height:1px;background:#5c5c5c;"></div>
<div style="left:374px;top:485px;width:11px;height:1px;background:#5c5c5c;"></div>
<div style="left:393px;top:485px;width:11px;height:1px;background:#5c5c5c;"></div>
<div style="left:374px;top:502px;width:11px;height:1px;background:#5c5c5c;"></div>
<div style="left:393px;top:502px;width:11px;height:1px;background:#5c5c5c;"></div>
<div style="left:376.8px;top:370px;width:8px;height:1px;background:#8a8a8a;"></div>
<div style="left:393px;top:370px;width:8px;height:1px;background:#8a8a8a;"></div>
<div style="left:376.8px;top:373px;width:8px;height:1px;background:#8a8a8a;"></div>
<div style="left:393px;top:373px;width:8px;height:1px;background:#8a8a8a;"></div>
<div style="left:376.8px;top:376px;width:8px;height:1px;background:#8a8a8a;"></div>
<div style="left:393px;top:376px;width:8px;height:1px;background:#8a8a8a;"></div>
<div style="left:376.8px;top:378px;width:8px;height:1px;background:#8a8a8a;"></div>
<div style="left:393px;top:378px;width:8px;height:1px;background:#8a8a8a;"></div>
<div style="left:376.8px;top:384px;width:8px;height:1px;background:#8a8a8a;"></div>
<div style="left:393px;top:384px;width:8px;height:1px;background:#8a8a8a;"></div>
<div style="left:376.8px;top:387px;width:8px;height:1px;background:#8a8a8a;"></div>
<div style="left:393px;top:387px;width:8px;height:1px;background:#8a8a8a;"></div>
<div style="left:376.8px;top:390px;width:8px;height:1px;background:#8a8a8a;"></div>
<div style="left:393px;top:390px;width:8px;height:1px;background:#8a8a8a;"></div>
<div style="left:376.8px;top:393px;width:8px;height:1px;background:#8a8a8a;"></div>
<div style="left:393px;top:393px;width:8px;height:1px;background:#8a8a8a;"></div>
<div class="t" style="left:367.8px;top:378.00px;font-size:9.5px;color:#7a7a7a;transform:scaleX(0.8);transform-origin:left 50%;">0</div>
<div class="t" style="left:406px;top:378.00px;font-size:9.5px;color:#7a7a7a;transform:scaleX(0.8);transform-origin:left 50%;">0</div>
<div style="left:387px;top:346px;width:1px;height:160px;background:#747474;"></div>
<div style="left:388px;top:346px;width:2px;height:160px;background:#8e8e8e;"></div>
<div style="left:390px;top:346px;width:1px;height:160px;background:#f0f0f0;"></div>
<div style="left:380.1px;top:364.1px;width:16.8px;height:34.7px;background:#000;box-shadow:1px 2px 3px rgba(0,0,0,0.35);"></div>
<svg style="position:absolute;left:380.1px;top:364.1px;overflow:visible" width="17" height="35"><path d="M3.8 5.5 H13.2 C16.2 11 16.2 23.5 13.2 29.2 H3.8 C0.8 23.5 0.8 11 3.8 5.5Z" fill="url(#cap)"/><path d="M2 29.2 H15 L16 34 H1Z" fill="#1e1e1e"/></svg>
<svg style="position:absolute;left:385px;top:513px" width="9" height="11" shape-rendering="crispEdges"><path d="M1 0h5v1h-5zM0 1h2v1h-2zM5 1h2v1h-2zM0 2h2v1h-2zM5 2h2v1h-2zM5 3h2v1h-2zM4 4h2v1h-2zM3 5h2v1h-2zM2 6h2v1h-2zM1 7h2v1h-2zM0 8h2v1h-2zM0 9h7v1h-7zM0 10h7v1h-7z" fill="#2a2a2a"/></svg>
<div style="left:363px;top:533px;width:48px;height:31.5px;background:#b9b9b9;border-radius:3px;box-shadow:inset 1px 1px 0 #c6c8ca;"></div>
<div style="left:366px;top:535px;width:21px;height:12px;background:#d6d6d6;border-top:1px solid #7a7a7a;border-left:1px solid #8a8a8a;border-bottom:1px solid #f4f4f4;"></div>
<div style="left:374px;top:542px;width:3px;height:1px;background:#000;"></div>
<div style="left:387px;top:535px;width:21px;height:12px;background:#d6d6d6;border-top:1px solid #7a7a7a;border-left:1px solid #8a8a8a;border-bottom:1px solid #f4f4f4;border-right:1px solid #eee;"></div>
<div style="left:395px;top:542px;width:3px;height:1px;background:#000;"></div>
<div style="left:366px;top:547px;width:42px;height:14px;background:#dadada;border-top:1px solid #7a7a7a;border-left:1px solid #8a8a8a;border-bottom:1px solid #f8f8f8;border-right:1px solid #eee;"></div>
<div style="left:415px;top:61px;width:47px;height:122px;background:#040404;border-radius:4px;"></div>
<div style="left:419px;top:69px;width:6px;height:3px;background:#521414;"></div>
<div style="left:452px;top:69px;width:6px;height:3px;background:#521414;"></div>
<div style="left:419px;top:75px;width:6px;height:3px;background:#6c5c32;"></div>
<div style="left:452px;top:75px;width:6px;height:3px;background:#6c5c32;"></div>
<div style="left:419px;top:81px;width:6px;height:3px;background:#6c5c32;"></div>
<div style="left:452px;top:81px;width:6px;height:3px;background:#6c5c32;"></div>
<div style="left:419px;top:87px;width:6px;height:3px;background:#6c5c32;"></div>
<div style="left:452px;top:87px;width:6px;height:3px;background:#6c5c32;"></div>
<div style="left:419px;top:93px;width:6px;height:3px;background:#18441a;"></div>
<div style="left:452px;top:93px;width:6px;height:3px;background:#18441a;"></div>
<div style="left:419px;top:99px;width:6px;height:3px;background:#18441a;"></div>
<div style="left:452px;top:99px;width:6px;height:3px;background:#18441a;"></div>
<div style="left:419px;top:105px;width:6px;height:3px;background:#18441a;"></div>
<div style="left:452px;top:105px;width:6px;height:3px;background:#18441a;"></div>
<div style="left:419px;top:111px;width:6px;height:3px;background:#18441a;"></div>
<div style="left:452px;top:111px;width:6px;height:3px;background:#18441a;"></div>
<div style="left:419px;top:117px;width:6px;height:3px;background:#18441a;"></div>
<div style="left:452px;top:117px;width:6px;height:3px;background:#18441a;"></div>
<div style="left:419px;top:123px;width:6px;height:3px;background:#18441a;"></div>
<div style="left:452px;top:123px;width:6px;height:3px;background:#18441a;"></div>
<div style="left:436px;top:70px;width:2px;height:1px;background:#c05050;"></div>
<div style="left:439px;top:70px;width:2px;height:1px;background:#c05050;"></div>
<div class="t" style="left:429px;top:100.00px;font-size:10.8px;color:#cacaca;transform:scaleX(0.86);transform-origin:left 50%;">Gain</div>
<svg style="position:absolute;left:428px;top:114px;overflow:visible" width="20" height="20"><circle cx="10" cy="9.3" r="9.2" fill="url(#knob)"/><path d="M10.2 2.8 V5.4" stroke="#3a3a3a" stroke-width="2.2" stroke-linecap="round"/></svg>
<div style="left:419px;top:138px;width:39px;height:12px;background:#d6d6d6;border-bottom:1px solid #f4f4f4;"></div>
<div class="t" style="left:419px;top:139.00px;font-size:11.2px;color:#000;width:39px;text-align:center;letter-spacing:0.4px;-webkit-text-stroke:0.25px #000;">0.0</div>
<div style="left:419.3px;top:155px;width:11px;height:11px;background:linear-gradient(135deg,#cfcfcf,#9a9a9a);border:1px solid #2a2a2a;border-top-color:#8a8a8a;border-left-color:#8a8a8a;border-radius:2px;"></div>
<div style="left:448.2px;top:155px;width:11px;height:11px;background:linear-gradient(135deg,#cfcfcf,#9a9a9a);border:1px solid #2a2a2a;border-top-color:#8a8a8a;border-left-color:#8a8a8a;border-radius:2px;"></div>
<div class="t" style="left:431.6px;top:154.00px;font-size:10.8px;color:#d4d4d4;">I</div>
<div class="t" style="left:436px;top:154.00px;font-size:10.8px;color:#d4d4d4;transform:scaleX(0.85);transform-origin:left 50%;">nv</div>
<div style="left:421px;top:170px;width:36.5px;height:9.3px;background:linear-gradient(#f59090,#e86c6c);border-bottom:1px solid #902a2a;border-right:1px solid #b04040;"></div>
<div class="t" style="left:421px;top:170.00px;font-size:8.6px;color:#2a0606;width:36px;text-align:center;transform:scaleX(1.1);transform-origin:center 50%;letter-spacing:0.2px;">Stereo</div>
<div style="left:414px;top:186px;width:48px;height:40px;background:#b9b9b9;border-radius:3px;box-shadow:inset 1px 1px 0 #c6c8ca;"></div>
<div style="left:418px;top:189px;width:41px;height:14px;background:#dddcd0;border-top:1px solid #808080;border-left:1px solid #8a8a8a;border-bottom:1px solid #fafafa;border-right:1px solid #f0f0f0;"></div>
<div class="t" style="left:419.5px;top:191.00px;font-size:10.8px;color:#000;">Master</div>
<div style="left:454.6px;top:192.3px;width:1.6px;height:3.6px;background:#000;transform:rotate(-35deg);"></div>
<div style="left:418px;top:207px;width:41px;height:14px;background:#dddcd0;border-top:1px solid #808080;border-left:1px solid #8a8a8a;border-bottom:1px solid #fafafa;border-right:1px solid #f0f0f0;"></div>
<div class="t" style="left:419.5px;top:209.00px;font-size:10.8px;color:#000;">Master</div>
<div style="left:454.6px;top:210.3px;width:1.6px;height:3.6px;background:#000;transform:rotate(-35deg);"></div>
<div style="left:414px;top:229px;width:48px;height:25px;background:#b9b9b9;border-radius:3px;box-shadow:inset 1px 1px 0 #c6c8ca;"></div>
<div style="left:419.3px;top:233px;width:17.3px;height:17px;background:#c4c4c4;border:1px solid #2a2a2a;border-radius:3px;box-shadow:inset 0 0 0 1px #747474, inset 2px 2px 0 #dcdcdc;"></div>
<div class="t" style="left:419.6px;top:235.00px;font-size:13px;color:#1a1a1a;font-weight:bold;width:17.3px;text-align:center;transform:scaleX(0.92);transform-origin:center 50%;">M</div>
<div style="left:439.5px;top:233px;width:17.3px;height:17px;background:#c4c4c4;border:1px solid #2a2a2a;border-radius:3px;box-shadow:inset 0 0 0 1px #747474, inset 2px 2px 0 #dcdcdc;"></div>
<div class="t" style="left:439.8px;top:235.00px;font-size:13px;color:#1a1a1a;font-weight:bold;width:17.3px;text-align:center;transform:scaleX(0.92);transform-origin:center 50%;">S</div>
<div style="left:414px;top:257px;width:48px;height:43px;background:#b9b9b9;border-radius:3px;box-shadow:inset 1px 1px 0 #c6c8ca;"></div>
<svg style="position:absolute;left:426.3px;top:260.5px;overflow:visible" width="19" height="19"><circle cx="8.7" cy="9" r="8.7" fill="url(#knob2)" stroke="#6c7074" stroke-width="0.7"/><path d="M8.7 2.3 V5" stroke="#2a2a2a" stroke-width="1.8" stroke-linecap="round"/></svg>
<div style="left:417.6px;top:282px;width:41.4px;height:15px;background:#dcdcdc;border-top:1px solid #a4a4a4;border-left:1px solid #a8a8a8;border-bottom:1px solid #f4f4f4;border-right:1px solid #ececec;"></div>
<div class="t" style="left:417px;top:285.00px;font-size:10.8px;color:#000;width:38px;text-align:center;transform:scaleX(0.95);transform-origin:center 50%;">Center</div>
<div style="left:414px;top:303.3px;width:48px;height:226.3px;background:#b9b9b9;border-radius:3px;box-shadow:inset 1px 1px 0 #c6c8ca;"></div>
<div style="left:417.5px;top:309px;width:41px;height:14px;background:#dcdcdc;border-top:1px solid #a4a4a4;border-left:1px solid #a8a8a8;border-bottom:1px solid #f4f4f4;border-right:1px solid #ececec;"></div>
<div class="t" style="left:405px;top:312.00px;font-size:10.3px;color:#000;width:41px;text-align:right;letter-spacing:0.8px;">100</div>
<div style="left:418.5px;top:325px;width:41px;height:14px;background:#dcdcdc;border-top:1px solid #a4a4a4;border-left:1px solid #a8a8a8;border-bottom:1px solid #f4f4f4;border-right:1px solid #ececec;"></div>
<div class="t" style="left:405px;top:328.00px;font-size:10.3px;color:#000;width:41px;text-align:right;letter-spacing:0.3px;">0.0</div>
<div style="left:425px;top:351px;width:11px;height:1px;background:#5c5c5c;"></div>
<div style="left:444px;top:351px;width:11px;height:1px;background:#5c5c5c;"></div>
<div style="left:425px;top:367px;width:11px;height:1px;background:#5c5c5c;"></div>
<div style="left:444px;top:367px;width:11px;height:1px;background:#5c5c5c;"></div>
<div style="left:425px;top:381px;width:11px;height:1px;background:#5c5c5c;"></div>
<div style="left:444px;top:381px;width:11px;height:1px;background:#5c5c5c;"></div>
<div style="left:425px;top:396px;width:11px;height:1px;background:#5c5c5c;"></div>
<div style="left:444px;top:396px;width:11px;height:1px;background:#5c5c5c;"></div>
<div style="left:425px;top:411px;width:11px;height:1px;background:#5c5c5c;"></div>
<div style="left:444px;top:411px;width:11px;height:1px;background:#5c5c5c;"></div>
<div style="left:425px;top:439px;width:11px;height:1px;background:#5c5c5c;"></div>
<div style="left:444px;top:439px;width:11px;height:1px;background:#5c5c5c;"></div>
<div style="left:425px;top:465px;width:11px;height:1px;background:#5c5c5c;"></div>
<div style="left:444px;top:465px;width:11px;height:1px;background:#5c5c5c;"></div>
<div style="left:425px;top:485px;width:11px;height:1px;background:#5c5c5c;"></div>
<div style="left:444px;top:485px;width:11px;height:1px;background:#5c5c5c;"></div>
<div style="left:425px;top:502px;width:11px;height:1px;background:#5c5c5c;"></div>
<div style="left:444px;top:502px;width:11px;height:1px;background:#5c5c5c;"></div>
<div style="left:427.8px;top:370px;width:8px;height:1px;background:#8a8a8a;"></div>
<div style="left:444px;top:370px;width:8px;height:1px;background:#8a8a8a;"></div>
<div style="left:427.8px;top:373px;width:8px;height:1px;background:#8a8a8a;"></div>
<div style="left:444px;top:373px;width:8px;height:1px;background:#8a8a8a;"></div>
<div style="left:427.8px;top:376px;width:8px;height:1px;background:#8a8a8a;"></div>
<div style="left:444px;top:376px;width:8px;height:1px;background:#8a8a8a;"></div>
<div style="left:427.8px;top:378px;width:8px;height:1px;background:#8a8a8a;"></div>
<div style="left:444px;top:378px;width:8px;height:1px;background:#8a8a8a;"></div>
<div style="left:427.8px;top:384px;width:8px;height:1px;background:#8a8a8a;"></div>
<div style="left:444px;top:384px;width:8px;height:1px;background:#8a8a8a;"></div>
<div style="left:427.8px;top:387px;width:8px;height:1px;background:#8a8a8a;"></div>
<div style="left:444px;top:387px;width:8px;height:1px;background:#8a8a8a;"></div>
<div style="left:427.8px;top:390px;width:8px;height:1px;background:#8a8a8a;"></div>
<div style="left:444px;top:390px;width:8px;height:1px;background:#8a8a8a;"></div>
<div style="left:427.8px;top:393px;width:8px;height:1px;background:#8a8a8a;"></div>
<div style="left:444px;top:393px;width:8px;height:1px;background:#8a8a8a;"></div>
<div class="t" style="left:418.8px;top:378.00px;font-size:9.5px;color:#7a7a7a;transform:scaleX(0.8);transform-origin:left 50%;">0</div>
<div class="t" style="left:457px;top:378.00px;font-size:9.5px;color:#7a7a7a;transform:scaleX(0.8);transform-origin:left 50%;">0</div>
<div style="left:438px;top:346px;width:1px;height:160px;background:#747474;"></div>
<div style="left:439px;top:346px;width:2px;height:160px;background:#8e8e8e;"></div>
<div style="left:441px;top:346px;width:1px;height:160px;background:#f0f0f0;"></div>
<div style="left:431.1px;top:364.1px;width:16.8px;height:34.7px;background:#000;box-shadow:1px 2px 3px rgba(0,0,0,0.35);"></div>
<svg style="position:absolute;left:431.1px;top:364.1px;overflow:visible" width="17" height="35"><path d="M3.8 5.5 H13.2 C16.2 11 16.2 23.5 13.2 29.2 H3.8 C0.8 23.5 0.8 11 3.8 5.5Z" fill="url(#cap)"/><path d="M2 29.2 H15 L16 34 H1Z" fill="#1e1e1e"/></svg>
<svg style="position:absolute;left:436px;top:513px" width="9" height="11" shape-rendering="crispEdges"><path d="M1 0h5v1h-5zM0 1h2v1h-2zM5 1h2v1h-2zM5 2h2v1h-2zM5 3h2v1h-2zM2 4h4v1h-4zM5 5h2v1h-2zM5 6h2v1h-2zM5 7h2v1h-2zM0 8h2v1h-2zM5 8h2v1h-2zM0 9h2v1h-2zM5 9h2v1h-2zM1 10h5v1h-5z" fill="#2a2a2a"/></svg>
<div style="left:414px;top:533px;width:48px;height:31.5px;background:#b9b9b9;border-radius:3px;box-shadow:inset 1px 1px 0 #c6c8ca;"></div>
<div style="left:417px;top:535px;width:21px;height:12px;background:#d6d6d6;border-top:1px solid #7a7a7a;border-left:1px solid #8a8a8a;border-bottom:1px solid #f4f4f4;"></div>
<div style="left:425px;top:542px;width:3px;height:1px;background:#000;"></div>
<div style="left:438px;top:535px;width:21px;height:12px;background:#d6d6d6;border-top:1px solid #7a7a7a;border-left:1px solid #8a8a8a;border-bottom:1px solid #f4f4f4;border-right:1px solid #eee;"></div>
<div style="left:446px;top:542px;width:3px;height:1px;background:#000;"></div>
<div style="left:417px;top:547px;width:42px;height:14px;background:#dadada;border-top:1px solid #7a7a7a;border-left:1px solid #8a8a8a;border-bottom:1px solid #f8f8f8;border-right:1px solid #eee;"></div>
<div style="left:466px;top:61px;width:47px;height:122px;background:#040404;border-radius:4px;"></div>
<div style="left:470px;top:69px;width:6px;height:3px;background:#521414;"></div>
<div style="left:503px;top:69px;width:6px;height:3px;background:#521414;"></div>
<div style="left:470px;top:75px;width:6px;height:3px;background:#6c5c32;"></div>
<div style="left:503px;top:75px;width:6px;height:3px;background:#6c5c32;"></div>
<div style="left:470px;top:81px;width:6px;height:3px;background:#6c5c32;"></div>
<div style="left:503px;top:81px;width:6px;height:3px;background:#6c5c32;"></div>
<div style="left:470px;top:87px;width:6px;height:3px;background:#6c5c32;"></div>
<div style="left:503px;top:87px;width:6px;height:3px;background:#6c5c32;"></div>
<div style="left:470px;top:93px;width:6px;height:3px;background:#18441a;"></div>
<div style="left:503px;top:93px;width:6px;height:3px;background:#18441a;"></div>
<div style="left:470px;top:99px;width:6px;height:3px;background:#18441a;"></div>
<div style="left:503px;top:99px;width:6px;height:3px;background:#18441a;"></div>
<div style="left:470px;top:105px;width:6px;height:3px;background:#18441a;"></div>
<div style="left:503px;top:105px;width:6px;height:3px;background:#18441a;"></div>
<div style="left:470px;top:111px;width:6px;height:3px;background:#18441a;"></div>
<div style="left:503px;top:111px;width:6px;height:3px;background:#18441a;"></div>
<div style="left:470px;top:117px;width:6px;height:3px;background:#18441a;"></div>
<div style="left:503px;top:117px;width:6px;height:3px;background:#18441a;"></div>
<div style="left:470px;top:123px;width:6px;height:3px;background:#18441a;"></div>
<div style="left:503px;top:123px;width:6px;height:3px;background:#18441a;"></div>
<div style="left:487px;top:70px;width:2px;height:1px;background:#c05050;"></div>
<div style="left:490px;top:70px;width:2px;height:1px;background:#c05050;"></div>
<div class="t" style="left:480px;top:100.00px;font-size:10.8px;color:#cacaca;transform:scaleX(0.86);transform-origin:left 50%;">Gain</div>
<svg style="position:absolute;left:479px;top:114px;overflow:visible" width="20" height="20"><circle cx="10" cy="9.3" r="9.2" fill="url(#knob)"/><path d="M10.2 2.8 V5.4" stroke="#3a3a3a" stroke-width="2.2" stroke-linecap="round"/></svg>
<div style="left:470px;top:138px;width:39px;height:12px;background:#d6d6d6;border-bottom:1px solid #f4f4f4;"></div>
<div class="t" style="left:470px;top:139.00px;font-size:11.2px;color:#000;width:39px;text-align:center;letter-spacing:0.4px;-webkit-text-stroke:0.25px #000;">0.0</div>
<div style="left:470.3px;top:155px;width:11px;height:11px;background:linear-gradient(135deg,#cfcfcf,#9a9a9a);border:1px solid #2a2a2a;border-top-color:#8a8a8a;border-left-color:#8a8a8a;border-radius:2px;"></div>
<div style="left:499.2px;top:155px;width:11px;height:11px;background:linear-gradient(135deg,#cfcfcf,#9a9a9a);border:1px solid #2a2a2a;border-top-color:#8a8a8a;border-left-color:#8a8a8a;border-radius:2px;"></div>
<div class="t" style="left:482.6px;top:154.00px;font-size:10.8px;color:#d4d4d4;">I</div>
<div class="t" style="left:487px;top:154.00px;font-size:10.8px;color:#d4d4d4;transform:scaleX(0.85);transform-origin:left 50%;">nv</div>
<div style="left:472px;top:170px;width:36.5px;height:9.3px;background:linear-gradient(#f59090,#e86c6c);border-bottom:1px solid #902a2a;border-right:1px solid #b04040;"></div>
<div class="t" style="left:472px;top:170.00px;font-size:8.6px;color:#2a0606;width:36px;text-align:center;transform:scaleX(1.1);transform-origin:center 50%;letter-spacing:0.2px;">Stereo</div>
<div style="left:465px;top:186px;width:48px;height:40px;background:#b9b9b9;border-radius:3px;box-shadow:inset 1px 1px 0 #c6c8ca;"></div>
<div style="left:469px;top:189px;width:41px;height:14px;background:#dddcd0;border-top:1px solid #808080;border-left:1px solid #8a8a8a;border-bottom:1px solid #fafafa;border-right:1px solid #f0f0f0;"></div>
<div class="t" style="left:470.5px;top:191.00px;font-size:10.8px;color:#000;">Master</div>
<div style="left:505.6px;top:192.3px;width:1.6px;height:3.6px;background:#000;transform:rotate(-35deg);"></div>
<div style="left:469px;top:207px;width:41px;height:14px;background:#dddcd0;border-top:1px solid #808080;border-left:1px solid #8a8a8a;border-bottom:1px solid #fafafa;border-right:1px solid #f0f0f0;"></div>
<div class="t" style="left:470.5px;top:209.00px;font-size:10.8px;color:#000;">Master</div>
<div style="left:505.6px;top:210.3px;width:1.6px;height:3.6px;background:#000;transform:rotate(-35deg);"></div>
<div style="left:465px;top:229px;width:48px;height:25px;background:#b9b9b9;border-radius:3px;box-shadow:inset 1px 1px 0 #c6c8ca;"></div>
<div style="left:470.3px;top:233px;width:17.3px;height:17px;background:#c4c4c4;border:1px solid #2a2a2a;border-radius:3px;box-shadow:inset 0 0 0 1px #747474, inset 2px 2px 0 #dcdcdc;"></div>
<div class="t" style="left:470.6px;top:235.00px;font-size:13px;color:#1a1a1a;font-weight:bold;width:17.3px;text-align:center;transform:scaleX(0.92);transform-origin:center 50%;">M</div>
<div style="left:490.5px;top:233px;width:17.3px;height:17px;background:#c4c4c4;border:1px solid #2a2a2a;border-radius:3px;box-shadow:inset 0 0 0 1px #747474, inset 2px 2px 0 #dcdcdc;"></div>
<div class="t" style="left:490.8px;top:235.00px;font-size:13px;color:#1a1a1a;font-weight:bold;width:17.3px;text-align:center;transform:scaleX(0.92);transform-origin:center 50%;">S</div>
<div style="left:465px;top:257px;width:48px;height:43px;background:#b9b9b9;border-radius:3px;box-shadow:inset 1px 1px 0 #c6c8ca;"></div>
<svg style="position:absolute;left:477.3px;top:260.5px;overflow:visible" width="19" height="19"><circle cx="8.7" cy="9" r="8.7" fill="url(#knob2)" stroke="#6c7074" stroke-width="0.7"/><path d="M8.7 2.3 V5" stroke="#2a2a2a" stroke-width="1.8" stroke-linecap="round"/></svg>
<div style="left:468.6px;top:282px;width:41.4px;height:15px;background:#dcdcdc;border-top:1px solid #a4a4a4;border-left:1px solid #a8a8a8;border-bottom:1px solid #f4f4f4;border-right:1px solid #ececec;"></div>
<div class="t" style="left:468px;top:285.00px;font-size:10.8px;color:#000;width:38px;text-align:center;transform:scaleX(0.95);transform-origin:center 50%;">Center</div>
<div style="left:465px;top:303.3px;width:48px;height:226.3px;background:#b9b9b9;border-radius:3px;box-shadow:inset 1px 1px 0 #c6c8ca;"></div>
<div style="left:468.5px;top:309px;width:41px;height:14px;background:#dcdcdc;border-top:1px solid #a4a4a4;border-left:1px solid #a8a8a8;border-bottom:1px solid #f4f4f4;border-right:1px solid #ececec;"></div>
<div class="t" style="left:456px;top:312.00px;font-size:10.3px;color:#000;width:41px;text-align:right;letter-spacing:0.8px;">100</div>
<div style="left:469.5px;top:325px;width:41px;height:14px;background:#dcdcdc;border-top:1px solid #a4a4a4;border-left:1px solid #a8a8a8;border-bottom:1px solid #f4f4f4;border-right:1px solid #ececec;"></div>
<div class="t" style="left:456px;top:328.00px;font-size:10.3px;color:#000;width:41px;text-align:right;letter-spacing:0.3px;">0.0</div>
<div style="left:476px;top:351px;width:11px;height:1px;background:#5c5c5c;"></div>
<div style="left:495px;top:351px;width:11px;height:1px;background:#5c5c5c;"></div>
<div style="left:476px;top:367px;width:11px;height:1px;background:#5c5c5c;"></div>
<div style="left:495px;top:367px;width:11px;height:1px;background:#5c5c5c;"></div>
<div style="left:476px;top:381px;width:11px;height:1px;background:#5c5c5c;"></div>
<div style="left:495px;top:381px;width:11px;height:1px;background:#5c5c5c;"></div>
<div style="left:476px;top:396px;width:11px;height:1px;background:#5c5c5c;"></div>
<div style="left:495px;top:396px;width:11px;height:1px;background:#5c5c5c;"></div>
<div style="left:476px;top:411px;width:11px;height:1px;background:#5c5c5c;"></div>
<div style="left:495px;top:411px;width:11px;height:1px;background:#5c5c5c;"></div>
<div style="left:476px;top:439px;width:11px;height:1px;background:#5c5c5c;"></div>
<div style="left:495px;top:439px;width:11px;height:1px;background:#5c5c5c;"></div>
<div style="left:476px;top:465px;width:11px;height:1px;background:#5c5c5c;"></div>
<div style="left:495px;top:465px;width:11px;height:1px;background:#5c5c5c;"></div>
<div style="left:476px;top:485px;width:11px;height:1px;background:#5c5c5c;"></div>
<div style="left:495px;top:485px;width:11px;height:1px;background:#5c5c5c;"></div>
<div style="left:476px;top:502px;width:11px;height:1px;background:#5c5c5c;"></div>
<div style="left:495px;top:502px;width:11px;height:1px;background:#5c5c5c;"></div>
<div style="left:478.8px;top:370px;width:8px;height:1px;background:#8a8a8a;"></div>
<div style="left:495px;top:370px;width:8px;height:1px;background:#8a8a8a;"></div>
<div style="left:478.8px;top:373px;width:8px;height:1px;background:#8a8a8a;"></div>
<div style="left:495px;top:373px;width:8px;height:1px;background:#8a8a8a;"></div>
<div style="left:478.8px;top:376px;width:8px;height:1px;background:#8a8a8a;"></div>
<div style="left:495px;top:376px;width:8px;height:1px;background:#8a8a8a;"></div>
<div style="left:478.8px;top:378px;width:8px;height:1px;background:#8a8a8a;"></div>
<div style="left:495px;top:378px;width:8px;height:1px;background:#8a8a8a;"></div>
<div style="left:478.8px;top:384px;width:8px;height:1px;background:#8a8a8a;"></div>
<div style="left:495px;top:384px;width:8px;height:1px;background:#8a8a8a;"></div>
<div style="left:478.8px;top:387px;width:8px;height:1px;background:#8a8a8a;"></div>
<div style="left:495px;top:387px;width:8px;height:1px;background:#8a8a8a;"></div>
<div style="left:478.8px;top:390px;width:8px;height:1px;background:#8a8a8a;"></div>
<div style="left:495px;top:390px;width:8px;height:1px;background:#8a8a8a;"></div>
<div style="left:478.8px;top:393px;width:8px;height:1px;background:#8a8a8a;"></div>
<div style="left:495px;top:393px;width:8px;height:1px;background:#8a8a8a;"></div>
<div class="t" style="left:469.8px;top:378.00px;font-size:9.5px;color:#7a7a7a;transform:scaleX(0.8);transform-origin:left 50%;">0</div>
<div class="t" style="left:508px;top:378.00px;font-size:9.5px;color:#7a7a7a;transform:scaleX(0.8);transform-origin:left 50%;">0</div>
<div style="left:489px;top:346px;width:1px;height:160px;background:#747474;"></div>
<div style="left:490px;top:346px;width:2px;height:160px;background:#8e8e8e;"></div>
<div style="left:492px;top:346px;width:1px;height:160px;background:#f0f0f0;"></div>
<div style="left:482.1px;top:364.1px;width:16.8px;height:34.7px;background:#000;box-shadow:1px 2px 3px rgba(0,0,0,0.35);"></div>
<svg style="position:absolute;left:482.1px;top:364.1px;overflow:visible" width="17" height="35"><path d="M3.8 5.5 H13.2 C16.2 11 16.2 23.5 13.2 29.2 H3.8 C0.8 23.5 0.8 11 3.8 5.5Z" fill="url(#cap)"/><path d="M2 29.2 H15 L16 34 H1Z" fill="#1e1e1e"/></svg>
<svg style="position:absolute;left:487px;top:513px" width="9" height="11" shape-rendering="crispEdges"><path d="M4 0h2v1h-2zM3 1h3v1h-3zM3 2h3v1h-3zM2 3h1v1h-1zM4 3h2v1h-2zM1 4h2v1h-2zM4 4h2v1h-2zM1 5h1v1h-1zM4 5h2v1h-2zM0 6h2v1h-2zM4 6h2v1h-2zM0 7h7v1h-7zM0 8h7v1h-7zM4 9h2v1h-2zM4 10h2v1h-2z" fill="#2a2a2a"/></svg>
<div style="left:465px;top:533px;width:48px;height:31.5px;background:#b9b9b9;border-radius:3px;box-shadow:inset 1px 1px 0 #c6c8ca;"></div>
<div style="left:468px;top:535px;width:21px;height:12px;background:#d6d6d6;border-top:1px solid #7a7a7a;border-left:1px solid #8a8a8a;border-bottom:1px solid #f4f4f4;"></div>
<div style="left:476px;top:542px;width:3px;height:1px;background:#000;"></div>
<div style="left:489px;top:535px;width:21px;height:12px;background:#d6d6d6;border-top:1px solid #7a7a7a;border-left:1px solid #8a8a8a;border-bottom:1px solid #f4f4f4;border-right:1px solid #eee;"></div>
<div style="left:497px;top:542px;width:3px;height:1px;background:#000;"></div>
<div style="left:468px;top:547px;width:42px;height:14px;background:#dadada;border-top:1px solid #7a7a7a;border-left:1px solid #8a8a8a;border-bottom:1px solid #f8f8f8;border-right:1px solid #eee;"></div>
<div style="left:516px;top:61px;width:47px;height:122px;background:#040404;border-radius:4px;"></div>
<div style="left:520px;top:69px;width:6px;height:3px;background:#521414;"></div>
<div style="left:553px;top:69px;width:6px;height:3px;background:#521414;"></div>
<div style="left:520px;top:75px;width:6px;height:3px;background:#6c5c32;"></div>
<div style="left:553px;top:75px;width:6px;height:3px;background:#6c5c32;"></div>
<div style="left:520px;top:81px;width:6px;height:3px;background:#6c5c32;"></div>
<div style="left:553px;top:81px;width:6px;height:3px;background:#6c5c32;"></div>
<div style="left:520px;top:87px;width:6px;height:3px;background:#6c5c32;"></div>
<div style="left:553px;top:87px;width:6px;height:3px;background:#6c5c32;"></div>
<div style="left:520px;top:93px;width:6px;height:3px;background:#18441a;"></div>
<div style="left:553px;top:93px;width:6px;height:3px;background:#18441a;"></div>
<div style="left:520px;top:99px;width:6px;height:3px;background:#18441a;"></div>
<div style="left:553px;top:99px;width:6px;height:3px;background:#18441a;"></div>
<div style="left:520px;top:105px;width:6px;height:3px;background:#18441a;"></div>
<div style="left:553px;top:105px;width:6px;height:3px;background:#18441a;"></div>
<div style="left:520px;top:111px;width:6px;height:3px;background:#18441a;"></div>
<div style="left:553px;top:111px;width:6px;height:3px;background:#18441a;"></div>
<div style="left:520px;top:117px;width:6px;height:3px;background:#18441a;"></div>
<div style="left:553px;top:117px;width:6px;height:3px;background:#18441a;"></div>
<div style="left:520px;top:123px;width:6px;height:3px;background:#18441a;"></div>
<div style="left:553px;top:123px;width:6px;height:3px;background:#18441a;"></div>
<div style="left:537px;top:70px;width:2px;height:1px;background:#c05050;"></div>
<div style="left:540px;top:70px;width:2px;height:1px;background:#c05050;"></div>
<div class="t" style="left:530px;top:100.00px;font-size:10.8px;color:#cacaca;transform:scaleX(0.86);transform-origin:left 50%;">Gain</div>
<svg style="position:absolute;left:529px;top:114px;overflow:visible" width="20" height="20"><circle cx="10" cy="9.3" r="9.2" fill="url(#knob)"/><path d="M10.2 2.8 V5.4" stroke="#3a3a3a" stroke-width="2.2" stroke-linecap="round"/></svg>
<div style="left:520px;top:138px;width:39px;height:12px;background:#d6d6d6;border-bottom:1px solid #f4f4f4;"></div>
<div class="t" style="left:520px;top:139.00px;font-size:11.2px;color:#000;width:39px;text-align:center;letter-spacing:0.4px;-webkit-text-stroke:0.25px #000;">0.0</div>
<div style="left:520.3px;top:155px;width:11px;height:11px;background:linear-gradient(135deg,#cfcfcf,#9a9a9a);border:1px solid #2a2a2a;border-top-color:#8a8a8a;border-left-color:#8a8a8a;border-radius:2px;"></div>
<div style="left:549.2px;top:155px;width:11px;height:11px;background:linear-gradient(135deg,#cfcfcf,#9a9a9a);border:1px solid #2a2a2a;border-top-color:#8a8a8a;border-left-color:#8a8a8a;border-radius:2px;"></div>
<div class="t" style="left:532.6px;top:154.00px;font-size:10.8px;color:#d4d4d4;">I</div>
<div class="t" style="left:537px;top:154.00px;font-size:10.8px;color:#d4d4d4;transform:scaleX(0.85);transform-origin:left 50%;">nv</div>
<div style="left:522px;top:170px;width:36.5px;height:9.3px;background:linear-gradient(#f59090,#e86c6c);border-bottom:1px solid #902a2a;border-right:1px solid #b04040;"></div>
<div class="t" style="left:522px;top:170.00px;font-size:8.6px;color:#2a0606;width:36px;text-align:center;transform:scaleX(1.1);transform-origin:center 50%;letter-spacing:0.2px;">Stereo</div>
<div style="left:516px;top:186px;width:47px;height:40px;background:#b9b9b9;border-radius:3px;box-shadow:inset 1px 1px 0 #c6c8ca;"></div>
<div style="left:519px;top:189px;width:41px;height:14px;background:#dddcd0;border-top:1px solid #808080;border-left:1px solid #8a8a8a;border-bottom:1px solid #fafafa;border-right:1px solid #f0f0f0;"></div>
<div class="t" style="left:520.5px;top:191.00px;font-size:10.8px;color:#000;">Master</div>
<div style="left:555.6px;top:192.3px;width:1.6px;height:3.6px;background:#000;transform:rotate(-35deg);"></div>
<div style="left:519px;top:207px;width:41px;height:14px;background:#dddcd0;border-top:1px solid #808080;border-left:1px solid #8a8a8a;border-bottom:1px solid #fafafa;border-right:1px solid #f0f0f0;"></div>
<div class="t" style="left:520.5px;top:209.00px;font-size:10.8px;color:#000;">Master</div>
<div style="left:555.6px;top:210.3px;width:1.6px;height:3.6px;background:#000;transform:rotate(-35deg);"></div>
<div style="left:516px;top:229px;width:47px;height:25px;background:#b9b9b9;border-radius:3px;box-shadow:inset 1px 1px 0 #c6c8ca;"></div>
<div style="left:520.3px;top:233px;width:17.3px;height:17px;background:#c4c4c4;border:1px solid #2a2a2a;border-radius:3px;box-shadow:inset 0 0 0 1px #747474, inset 2px 2px 0 #dcdcdc;"></div>
<div class="t" style="left:520.5999999999999px;top:235.00px;font-size:13px;color:#1a1a1a;font-weight:bold;width:17.3px;text-align:center;transform:scaleX(0.92);transform-origin:center 50%;">M</div>
<div style="left:540.5px;top:233px;width:17.3px;height:17px;background:#c4c4c4;border:1px solid #2a2a2a;border-radius:3px;box-shadow:inset 0 0 0 1px #747474, inset 2px 2px 0 #dcdcdc;"></div>
<div class="t" style="left:540.8px;top:235.00px;font-size:13px;color:#1a1a1a;font-weight:bold;width:17.3px;text-align:center;transform:scaleX(0.92);transform-origin:center 50%;">S</div>
<div style="left:516px;top:257px;width:47px;height:43px;background:#b9b9b9;border-radius:3px;box-shadow:inset 1px 1px 0 #c6c8ca;"></div>
<svg style="position:absolute;left:527.3px;top:260.5px;overflow:visible" width="19" height="19"><circle cx="8.7" cy="9" r="8.7" fill="url(#knob2)" stroke="#6c7074" stroke-width="0.7"/><path d="M8.7 2.3 V5" stroke="#2a2a2a" stroke-width="1.8" stroke-linecap="round"/></svg>
<div style="left:518.6px;top:282px;width:41.4px;height:15px;background:#dcdcdc;border-top:1px solid #a4a4a4;border-left:1px solid #a8a8a8;border-bottom:1px solid #f4f4f4;border-right:1px solid #ececec;"></div>
<div class="t" style="left:518px;top:285.00px;font-size:10.8px;color:#000;width:38px;text-align:center;transform:scaleX(0.95);transform-origin:center 50%;">Center</div>
<div style="left:516px;top:303.3px;width:47px;height:226.3px;background:#b9b9b9;border-radius:3px;box-shadow:inset 1px 1px 0 #c6c8ca;"></div>
<div style="left:518.5px;top:309px;width:41px;height:14px;background:#dcdcdc;border-top:1px solid #a4a4a4;border-left:1px solid #a8a8a8;border-bottom:1px solid #f4f4f4;border-right:1px solid #ececec;"></div>
<div class="t" style="left:506px;top:312.00px;font-size:10.3px;color:#000;width:41px;text-align:right;letter-spacing:0.8px;">100</div>
<div style="left:519.5px;top:325px;width:41px;height:14px;background:#dcdcdc;border-top:1px solid #a4a4a4;border-left:1px solid #a8a8a8;border-bottom:1px solid #f4f4f4;border-right:1px solid #ececec;"></div>
<div class="t" style="left:506px;top:328.00px;font-size:10.3px;color:#000;width:41px;text-align:right;letter-spacing:0.3px;">0.0</div>
<div style="left:526px;top:351px;width:11px;height:1px;background:#5c5c5c;"></div>
<div style="left:545px;top:351px;width:11px;height:1px;background:#5c5c5c;"></div>
<div style="left:526px;top:367px;width:11px;height:1px;background:#5c5c5c;"></div>
<div style="left:545px;top:367px;width:11px;height:1px;background:#5c5c5c;"></div>
<div style="left:526px;top:381px;width:11px;height:1px;background:#5c5c5c;"></div>
<div style="left:545px;top:381px;width:11px;height:1px;background:#5c5c5c;"></div>
<div style="left:526px;top:396px;width:11px;height:1px;background:#5c5c5c;"></div>
<div style="left:545px;top:396px;width:11px;height:1px;background:#5c5c5c;"></div>
<div style="left:526px;top:411px;width:11px;height:1px;background:#5c5c5c;"></div>
<div style="left:545px;top:411px;width:11px;height:1px;background:#5c5c5c;"></div>
<div style="left:526px;top:439px;width:11px;height:1px;background:#5c5c5c;"></div>
<div style="left:545px;top:439px;width:11px;height:1px;background:#5c5c5c;"></div>
<div style="left:526px;top:465px;width:11px;height:1px;background:#5c5c5c;"></div>
<div style="left:545px;top:465px;width:11px;height:1px;background:#5c5c5c;"></div>
<div style="left:526px;top:485px;width:11px;height:1px;background:#5c5c5c;"></div>
<div style="left:545px;top:485px;width:11px;height:1px;background:#5c5c5c;"></div>
<div style="left:526px;top:502px;width:11px;height:1px;background:#5c5c5c;"></div>
<div style="left:545px;top:502px;width:11px;height:1px;background:#5c5c5c;"></div>
<div style="left:528.8px;top:370px;width:8px;height:1px;background:#8a8a8a;"></div>
<div style="left:545px;top:370px;width:8px;height:1px;background:#8a8a8a;"></div>
<div style="left:528.8px;top:373px;width:8px;height:1px;background:#8a8a8a;"></div>
<div style="left:545px;top:373px;width:8px;height:1px;background:#8a8a8a;"></div>
<div style="left:528.8px;top:376px;width:8px;height:1px;background:#8a8a8a;"></div>
<div style="left:545px;top:376px;width:8px;height:1px;background:#8a8a8a;"></div>
<div style="left:528.8px;top:378px;width:8px;height:1px;background:#8a8a8a;"></div>
<div style="left:545px;top:378px;width:8px;height:1px;background:#8a8a8a;"></div>
<div style="left:528.8px;top:384px;width:8px;height:1px;background:#8a8a8a;"></div>
<div style="left:545px;top:384px;width:8px;height:1px;background:#8a8a8a;"></div>
<div style="left:528.8px;top:387px;width:8px;height:1px;background:#8a8a8a;"></div>
<div style="left:545px;top:387px;width:8px;height:1px;background:#8a8a8a;"></div>
<div style="left:528.8px;top:390px;width:8px;height:1px;background:#8a8a8a;"></div>
<div style="left:545px;top:390px;width:8px;height:1px;background:#8a8a8a;"></div>
<div style="left:528.8px;top:393px;width:8px;height:1px;background:#8a8a8a;"></div>
<div style="left:545px;top:393px;width:8px;height:1px;background:#8a8a8a;"></div>
<div class="t" style="left:519.8px;top:378.00px;font-size:9.5px;color:#7a7a7a;transform:scaleX(0.8);transform-origin:left 50%;">0</div>
<div class="t" style="left:558px;top:378.00px;font-size:9.5px;color:#7a7a7a;transform:scaleX(0.8);transform-origin:left 50%;">0</div>
<div style="left:539px;top:346px;width:1px;height:160px;background:#747474;"></div>
<div style="left:540px;top:346px;width:2px;height:160px;background:#8e8e8e;"></div>
<div style="left:542px;top:346px;width:1px;height:160px;background:#f0f0f0;"></div>
<div style="left:532.1px;top:364.1px;width:16.8px;height:34.7px;background:#000;box-shadow:1px 2px 3px rgba(0,0,0,0.35);"></div>
<svg style="position:absolute;left:532.1px;top:364.1px;overflow:visible" width="17" height="35"><path d="M3.8 5.5 H13.2 C16.2 11 16.2 23.5 13.2 29.2 H3.8 C0.8 23.5 0.8 11 3.8 5.5Z" fill="url(#cap)"/><path d="M2 29.2 H15 L16 34 H1Z" fill="#1e1e1e"/></svg>
<svg style="position:absolute;left:537px;top:513px" width="9" height="11" shape-rendering="crispEdges"><path d="M0 0h7v1h-7zM0 1h2v1h-2zM0 2h2v1h-2zM0 3h2v1h-2zM0 4h6v1h-6zM5 5h2v1h-2zM5 6h2v1h-2zM5 7h2v1h-2zM0 8h2v1h-2zM5 8h2v1h-2zM0 9h2v1h-2zM5 9h2v1h-2zM1 10h5v1h-5z" fill="#2a2a2a"/></svg>
<div style="left:516px;top:533px;width:47px;height:31.5px;background:#b9b9b9;border-radius:3px;box-shadow:inset 1px 1px 0 #c6c8ca;"></div>
<div style="left:518px;top:535px;width:21px;height:12px;background:#d6d6d6;border-top:1px solid #7a7a7a;border-left:1px solid #8a8a8a;border-bottom:1px solid #f4f4f4;"></div>
<div style="left:526px;top:542px;width:3px;height:1px;background:#000;"></div>
<div style="left:539px;top:535px;width:21px;height:12px;background:#d6d6d6;border-top:1px solid #7a7a7a;border-left:1px solid #8a8a8a;border-bottom:1px solid #f4f4f4;border-right:1px solid #eee;"></div>
<div style="left:547px;top:542px;width:3px;height:1px;background:#000;"></div>
<div style="left:518px;top:547px;width:42px;height:14px;background:#dadada;border-top:1px solid #7a7a7a;border-left:1px solid #8a8a8a;border-bottom:1px solid #f8f8f8;border-right:1px solid #eee;"></div>
<div style="left:567px;top:61px;width:47px;height:122px;background:#040404;border-radius:4px;"></div>
<div style="left:571px;top:69px;width:6px;height:3px;background:#521414;"></div>
<div style="left:604px;top:69px;width:6px;height:3px;background:#521414;"></div>
<div style="left:571px;top:75px;width:6px;height:3px;background:#6c5c32;"></div>
<div style="left:604px;top:75px;width:6px;height:3px;background:#6c5c32;"></div>
<div style="left:571px;top:81px;width:6px;height:3px;background:#6c5c32;"></div>
<div style="left:604px;top:81px;width:6px;height:3px;background:#6c5c32;"></div>
<div style="left:571px;top:87px;width:6px;height:3px;background:#6c5c32;"></div>
<div style="left:604px;top:87px;width:6px;height:3px;background:#6c5c32;"></div>
<div style="left:571px;top:93px;width:6px;height:3px;background:#18441a;"></div>
<div style="left:604px;top:93px;width:6px;height:3px;background:#18441a;"></div>
<div style="left:571px;top:99px;width:6px;height:3px;background:#18441a;"></div>
<div style="left:604px;top:99px;width:6px;height:3px;background:#18441a;"></div>
<div style="left:571px;top:105px;width:6px;height:3px;background:#18441a;"></div>
<div style="left:604px;top:105px;width:6px;height:3px;background:#18441a;"></div>
<div style="left:571px;top:111px;width:6px;height:3px;background:#18441a;"></div>
<div style="left:604px;top:111px;width:6px;height:3px;background:#18441a;"></div>
<div style="left:571px;top:117px;width:6px;height:3px;background:#18441a;"></div>
<div style="left:604px;top:117px;width:6px;height:3px;background:#18441a;"></div>
<div style="left:571px;top:123px;width:6px;height:3px;background:#18441a;"></div>
<div style="left:604px;top:123px;width:6px;height:3px;background:#18441a;"></div>
<div style="left:588px;top:70px;width:2px;height:1px;background:#c05050;"></div>
<div style="left:591px;top:70px;width:2px;height:1px;background:#c05050;"></div>
<div class="t" style="left:581px;top:100.00px;font-size:10.8px;color:#cacaca;transform:scaleX(0.86);transform-origin:left 50%;">Gain</div>
<svg style="position:absolute;left:580px;top:114px;overflow:visible" width="20" height="20"><circle cx="10" cy="9.3" r="9.2" fill="url(#knob)"/><path d="M10.2 2.8 V5.4" stroke="#3a3a3a" stroke-width="2.2" stroke-linecap="round"/></svg>
<div style="left:571px;top:138px;width:39px;height:12px;background:#d6d6d6;border-bottom:1px solid #f4f4f4;"></div>
<div class="t" style="left:571px;top:139.00px;font-size:11.2px;color:#000;width:39px;text-align:center;letter-spacing:0.4px;-webkit-text-stroke:0.25px #000;">0.0</div>
<div style="left:571.3px;top:155px;width:11px;height:11px;background:linear-gradient(135deg,#cfcfcf,#9a9a9a);border:1px solid #2a2a2a;border-top-color:#8a8a8a;border-left-color:#8a8a8a;border-radius:2px;"></div>
<div style="left:600.2px;top:155px;width:11px;height:11px;background:linear-gradient(135deg,#cfcfcf,#9a9a9a);border:1px solid #2a2a2a;border-top-color:#8a8a8a;border-left-color:#8a8a8a;border-radius:2px;"></div>
<div class="t" style="left:583.6px;top:154.00px;font-size:10.8px;color:#d4d4d4;">I</div>
<div class="t" style="left:588px;top:154.00px;font-size:10.8px;color:#d4d4d4;transform:scaleX(0.85);transform-origin:left 50%;">nv</div>
<div style="left:573px;top:170px;width:36.5px;height:9.3px;background:linear-gradient(#f59090,#e86c6c);border-bottom:1px solid #902a2a;border-right:1px solid #b04040;"></div>
<div class="t" style="left:573px;top:170.00px;font-size:8.6px;color:#2a0606;width:36px;text-align:center;transform:scaleX(1.1);transform-origin:center 50%;letter-spacing:0.2px;">Stereo</div>
<div style="left:566px;top:186px;width:48px;height:40px;background:#b9b9b9;border-radius:3px;box-shadow:inset 1px 1px 0 #c6c8ca;"></div>
<div style="left:570px;top:189px;width:41px;height:14px;background:#dddcd0;border-top:1px solid #808080;border-left:1px solid #8a8a8a;border-bottom:1px solid #fafafa;border-right:1px solid #f0f0f0;"></div>
<div class="t" style="left:571.5px;top:191.00px;font-size:10.8px;color:#000;">Master</div>
<div style="left:606.6px;top:192.3px;width:1.6px;height:3.6px;background:#000;transform:rotate(-35deg);"></div>
<div style="left:570px;top:207px;width:41px;height:14px;background:#dddcd0;border-top:1px solid #808080;border-left:1px solid #8a8a8a;border-bottom:1px solid #fafafa;border-right:1px solid #f0f0f0;"></div>
<div class="t" style="left:571.5px;top:209.00px;font-size:10.8px;color:#000;">Master</div>
<div style="left:606.6px;top:210.3px;width:1.6px;height:3.6px;background:#000;transform:rotate(-35deg);"></div>
<div style="left:566px;top:229px;width:48px;height:25px;background:#b9b9b9;border-radius:3px;box-shadow:inset 1px 1px 0 #c6c8ca;"></div>
<div style="left:571.3px;top:233px;width:17.3px;height:17px;background:#c4c4c4;border:1px solid #2a2a2a;border-radius:3px;box-shadow:inset 0 0 0 1px #747474, inset 2px 2px 0 #dcdcdc;"></div>
<div class="t" style="left:571.5999999999999px;top:235.00px;font-size:13px;color:#1a1a1a;font-weight:bold;width:17.3px;text-align:center;transform:scaleX(0.92);transform-origin:center 50%;">M</div>
<div style="left:591.5px;top:233px;width:17.3px;height:17px;background:#c4c4c4;border:1px solid #2a2a2a;border-radius:3px;box-shadow:inset 0 0 0 1px #747474, inset 2px 2px 0 #dcdcdc;"></div>
<div class="t" style="left:591.8px;top:235.00px;font-size:13px;color:#1a1a1a;font-weight:bold;width:17.3px;text-align:center;transform:scaleX(0.92);transform-origin:center 50%;">S</div>
<div style="left:566px;top:257px;width:48px;height:43px;background:#b9b9b9;border-radius:3px;box-shadow:inset 1px 1px 0 #c6c8ca;"></div>
<svg style="position:absolute;left:578.3px;top:260.5px;overflow:visible" width="19" height="19"><circle cx="8.7" cy="9" r="8.7" fill="url(#knob2)" stroke="#6c7074" stroke-width="0.7"/><path d="M8.7 2.3 V5" stroke="#2a2a2a" stroke-width="1.8" stroke-linecap="round"/></svg>
<div style="left:569.6px;top:282px;width:41.4px;height:15px;background:#dcdcdc;border-top:1px solid #a4a4a4;border-left:1px solid #a8a8a8;border-bottom:1px solid #f4f4f4;border-right:1px solid #ececec;"></div>
<div class="t" style="left:569px;top:285.00px;font-size:10.8px;color:#000;width:38px;text-align:center;transform:scaleX(0.95);transform-origin:center 50%;">Center</div>
<div style="left:566px;top:303.3px;width:48px;height:226.3px;background:#b9b9b9;border-radius:3px;box-shadow:inset 1px 1px 0 #c6c8ca;"></div>
<div style="left:569.5px;top:309px;width:41px;height:14px;background:#dcdcdc;border-top:1px solid #a4a4a4;border-left:1px solid #a8a8a8;border-bottom:1px solid #f4f4f4;border-right:1px solid #ececec;"></div>
<div class="t" style="left:557px;top:312.00px;font-size:10.3px;color:#000;width:41px;text-align:right;letter-spacing:0.8px;">100</div>
<div style="left:570.5px;top:325px;width:41px;height:14px;background:#dcdcdc;border-top:1px solid #a4a4a4;border-left:1px solid #a8a8a8;border-bottom:1px solid #f4f4f4;border-right:1px solid #ececec;"></div>
<div class="t" style="left:557px;top:328.00px;font-size:10.3px;color:#000;width:41px;text-align:right;letter-spacing:0.3px;">0.0</div>
<div style="left:577px;top:351px;width:11px;height:1px;background:#5c5c5c;"></div>
<div style="left:596px;top:351px;width:11px;height:1px;background:#5c5c5c;"></div>
<div style="left:577px;top:367px;width:11px;height:1px;background:#5c5c5c;"></div>
<div style="left:596px;top:367px;width:11px;height:1px;background:#5c5c5c;"></div>
<div style="left:577px;top:381px;width:11px;height:1px;background:#5c5c5c;"></div>
<div style="left:596px;top:381px;width:11px;height:1px;background:#5c5c5c;"></div>
<div style="left:577px;top:396px;width:11px;height:1px;background:#5c5c5c;"></div>
<div style="left:596px;top:396px;width:11px;height:1px;background:#5c5c5c;"></div>
<div style="left:577px;top:411px;width:11px;height:1px;background:#5c5c5c;"></div>
<div style="left:596px;top:411px;width:11px;height:1px;background:#5c5c5c;"></div>
<div style="left:577px;top:439px;width:11px;height:1px;background:#5c5c5c;"></div>
<div style="left:596px;top:439px;width:11px;height:1px;background:#5c5c5c;"></div>
<div style="left:577px;top:465px;width:11px;height:1px;background:#5c5c5c;"></div>
<div style="left:596px;top:465px;width:11px;height:1px;background:#5c5c5c;"></div>
<div style="left:577px;top:485px;width:11px;height:1px;background:#5c5c5c;"></div>
<div style="left:596px;top:485px;width:11px;height:1px;background:#5c5c5c;"></div>
<div style="left:577px;top:502px;width:11px;height:1px;background:#5c5c5c;"></div>
<div style="left:596px;top:502px;width:11px;height:1px;background:#5c5c5c;"></div>
<div style="left:579.8px;top:370px;width:8px;height:1px;background:#8a8a8a;"></div>
<div style="left:596px;top:370px;width:8px;height:1px;background:#8a8a8a;"></div>
<div style="left:579.8px;top:373px;width:8px;height:1px;background:#8a8a8a;"></div>
<div style="left:596px;top:373px;width:8px;height:1px;background:#8a8a8a;"></div>
<div style="left:579.8px;top:376px;width:8px;height:1px;background:#8a8a8a;"></div>
<div style="left:596px;top:376px;width:8px;height:1px;background:#8a8a8a;"></div>
<div style="left:579.8px;top:378px;width:8px;height:1px;background:#8a8a8a;"></div>
<div style="left:596px;top:378px;width:8px;height:1px;background:#8a8a8a;"></div>
<div style="left:579.8px;top:384px;width:8px;height:1px;background:#8a8a8a;"></div>
<div style="left:596px;top:384px;width:8px;height:1px;background:#8a8a8a;"></div>
<div style="left:579.8px;top:387px;width:8px;height:1px;background:#8a8a8a;"></div>
<div style="left:596px;top:387px;width:8px;height:1px;background:#8a8a8a;"></div>
<div style="left:579.8px;top:390px;width:8px;height:1px;background:#8a8a8a;"></div>
<div style="left:596px;top:390px;width:8px;height:1px;background:#8a8a8a;"></div>
<div style="left:579.8px;top:393px;width:8px;height:1px;background:#8a8a8a;"></div>
<div style="left:596px;top:393px;width:8px;height:1px;background:#8a8a8a;"></div>
<div class="t" style="left:570.8px;top:378.00px;font-size:9.5px;color:#7a7a7a;transform:scaleX(0.8);transform-origin:left 50%;">0</div>
<div class="t" style="left:609px;top:378.00px;font-size:9.5px;color:#7a7a7a;transform:scaleX(0.8);transform-origin:left 50%;">0</div>
<div style="left:590px;top:346px;width:1px;height:160px;background:#747474;"></div>
<div style="left:591px;top:346px;width:2px;height:160px;background:#8e8e8e;"></div>
<div style="left:593px;top:346px;width:1px;height:160px;background:#f0f0f0;"></div>
<div style="left:583.1px;top:364.1px;width:16.8px;height:34.7px;background:#000;box-shadow:1px 2px 3px rgba(0,0,0,0.35);"></div>
<svg style="position:absolute;left:583.1px;top:364.1px;overflow:visible" width="17" height="35"><path d="M3.8 5.5 H13.2 C16.2 11 16.2 23.5 13.2 29.2 H3.8 C0.8 23.5 0.8 11 3.8 5.5Z" fill="url(#cap)"/><path d="M2 29.2 H15 L16 34 H1Z" fill="#1e1e1e"/></svg>
<svg style="position:absolute;left:588px;top:513px" width="9" height="11" shape-rendering="crispEdges"><path d="M2 0h4v1h-4zM1 1h2v1h-2zM0 2h2v1h-2zM0 3h2v1h-2zM0 4h6v1h-6zM0 5h2v1h-2zM5 5h2v1h-2zM0 6h2v1h-2zM5 6h2v1h-2zM0 7h2v1h-2zM5 7h2v1h-2zM0 8h2v1h-2zM5 8h2v1h-2zM0 9h2v1h-2zM5 9h2v1h-2zM1 10h5v1h-5z" fill="#2a2a2a"/></svg>
<div style="left:566px;top:533px;width:48px;height:31.5px;background:#b9b9b9;border-radius:3px;box-shadow:inset 1px 1px 0 #c6c8ca;"></div>
<div style="left:569px;top:535px;width:21px;height:12px;background:#d6d6d6;border-top:1px solid #7a7a7a;border-left:1px solid #8a8a8a;border-bottom:1px solid #f4f4f4;"></div>
<div style="left:577px;top:542px;width:3px;height:1px;background:#000;"></div>
<div style="left:590px;top:535px;width:21px;height:12px;background:#d6d6d6;border-top:1px solid #7a7a7a;border-left:1px solid #8a8a8a;border-bottom:1px solid #f4f4f4;border-right:1px solid #eee;"></div>
<div style="left:598px;top:542px;width:3px;height:1px;background:#000;"></div>
<div style="left:569px;top:547px;width:42px;height:14px;background:#dadada;border-top:1px solid #7a7a7a;border-left:1px solid #8a8a8a;border-bottom:1px solid #f8f8f8;border-right:1px solid #eee;"></div>
<div style="left:618px;top:61px;width:47px;height:122px;background:#040404;border-radius:4px;"></div>
<div style="left:622px;top:69px;width:6px;height:3px;background:#521414;"></div>
<div style="left:655px;top:69px;width:6px;height:3px;background:#521414;"></div>
<div style="left:622px;top:75px;width:6px;height:3px;background:#6c5c32;"></div>
<div style="left:655px;top:75px;width:6px;height:3px;background:#6c5c32;"></div>
<div style="left:622px;top:81px;width:6px;height:3px;background:#6c5c32;"></div>
<div style="left:655px;top:81px;width:6px;height:3px;background:#6c5c32;"></div>
<div style="left:622px;top:87px;width:6px;height:3px;background:#6c5c32;"></div>
<div style="left:655px;top:87px;width:6px;height:3px;background:#6c5c32;"></div>
<div style="left:622px;top:93px;width:6px;height:3px;background:#18441a;"></div>
<div style="left:655px;top:93px;width:6px;height:3px;background:#18441a;"></div>
<div style="left:622px;top:99px;width:6px;height:3px;background:#18441a;"></div>
<div style="left:655px;top:99px;width:6px;height:3px;background:#18441a;"></div>
<div style="left:622px;top:105px;width:6px;height:3px;background:#18441a;"></div>
<div style="left:655px;top:105px;width:6px;height:3px;background:#18441a;"></div>
<div style="left:622px;top:111px;width:6px;height:3px;background:#18441a;"></div>
<div style="left:655px;top:111px;width:6px;height:3px;background:#18441a;"></div>
<div style="left:622px;top:117px;width:6px;height:3px;background:#18441a;"></div>
<div style="left:655px;top:117px;width:6px;height:3px;background:#18441a;"></div>
<div style="left:622px;top:123px;width:6px;height:3px;background:#18441a;"></div>
<div style="left:655px;top:123px;width:6px;height:3px;background:#18441a;"></div>
<div style="left:639px;top:70px;width:2px;height:1px;background:#c05050;"></div>
<div style="left:642px;top:70px;width:2px;height:1px;background:#c05050;"></div>
<div class="t" style="left:632px;top:100.00px;font-size:10.8px;color:#cacaca;transform:scaleX(0.86);transform-origin:left 50%;">Gain</div>
<svg style="position:absolute;left:631px;top:114px;overflow:visible" width="20" height="20"><circle cx="10" cy="9.3" r="9.2" fill="url(#knob)"/><path d="M10.2 2.8 V5.4" stroke="#3a3a3a" stroke-width="2.2" stroke-linecap="round"/></svg>
<div style="left:622px;top:138px;width:39px;height:12px;background:#d6d6d6;border-bottom:1px solid #f4f4f4;"></div>
<div class="t" style="left:622px;top:139.00px;font-size:11.2px;color:#000;width:39px;text-align:center;letter-spacing:0.4px;-webkit-text-stroke:0.25px #000;">0.0</div>
<div style="left:622.3px;top:155px;width:11px;height:11px;background:linear-gradient(135deg,#cfcfcf,#9a9a9a);border:1px solid #2a2a2a;border-top-color:#8a8a8a;border-left-color:#8a8a8a;border-radius:2px;"></div>
<div style="left:651.2px;top:155px;width:11px;height:11px;background:linear-gradient(135deg,#cfcfcf,#9a9a9a);border:1px solid #2a2a2a;border-top-color:#8a8a8a;border-left-color:#8a8a8a;border-radius:2px;"></div>
<div class="t" style="left:634.6px;top:154.00px;font-size:10.8px;color:#d4d4d4;">I</div>
<div class="t" style="left:639px;top:154.00px;font-size:10.8px;color:#d4d4d4;transform:scaleX(0.85);transform-origin:left 50%;">nv</div>
<div style="left:624px;top:170px;width:36.5px;height:9.3px;background:linear-gradient(#f59090,#e86c6c);border-bottom:1px solid #902a2a;border-right:1px solid #b04040;"></div>
<div class="t" style="left:624px;top:170.00px;font-size:8.6px;color:#2a0606;width:36px;text-align:center;transform:scaleX(1.1);transform-origin:center 50%;letter-spacing:0.2px;">Stereo</div>
<div style="left:617px;top:186px;width:48px;height:40px;background:#b9b9b9;border-radius:3px;box-shadow:inset 1px 1px 0 #c6c8ca;"></div>
<div style="left:621px;top:189px;width:41px;height:14px;background:#dddcd0;border-top:1px solid #808080;border-left:1px solid #8a8a8a;border-bottom:1px solid #fafafa;border-right:1px solid #f0f0f0;"></div>
<div class="t" style="left:622.5px;top:191.00px;font-size:10.8px;color:#000;">Master</div>
<div style="left:657.6px;top:192.3px;width:1.6px;height:3.6px;background:#000;transform:rotate(-35deg);"></div>
<div style="left:621px;top:207px;width:41px;height:14px;background:#dddcd0;border-top:1px solid #808080;border-left:1px solid #8a8a8a;border-bottom:1px solid #fafafa;border-right:1px solid #f0f0f0;"></div>
<div class="t" style="left:622.5px;top:209.00px;font-size:10.8px;color:#000;">Master</div>
<div style="left:657.6px;top:210.3px;width:1.6px;height:3.6px;background:#000;transform:rotate(-35deg);"></div>
<div style="left:617px;top:229px;width:48px;height:25px;background:#b9b9b9;border-radius:3px;box-shadow:inset 1px 1px 0 #c6c8ca;"></div>
<div style="left:622.3px;top:233px;width:17.3px;height:17px;background:#c4c4c4;border:1px solid #2a2a2a;border-radius:3px;box-shadow:inset 0 0 0 1px #747474, inset 2px 2px 0 #dcdcdc;"></div>
<div class="t" style="left:622.5999999999999px;top:235.00px;font-size:13px;color:#1a1a1a;font-weight:bold;width:17.3px;text-align:center;transform:scaleX(0.92);transform-origin:center 50%;">M</div>
<div style="left:642.5px;top:233px;width:17.3px;height:17px;background:#c4c4c4;border:1px solid #2a2a2a;border-radius:3px;box-shadow:inset 0 0 0 1px #747474, inset 2px 2px 0 #dcdcdc;"></div>
<div class="t" style="left:642.8px;top:235.00px;font-size:13px;color:#1a1a1a;font-weight:bold;width:17.3px;text-align:center;transform:scaleX(0.92);transform-origin:center 50%;">S</div>
<div style="left:617px;top:257px;width:48px;height:43px;background:#b9b9b9;border-radius:3px;box-shadow:inset 1px 1px 0 #c6c8ca;"></div>
<svg style="position:absolute;left:629.3px;top:260.5px;overflow:visible" width="19" height="19"><circle cx="8.7" cy="9" r="8.7" fill="url(#knob2)" stroke="#6c7074" stroke-width="0.7"/><path d="M8.7 2.3 V5" stroke="#2a2a2a" stroke-width="1.8" stroke-linecap="round"/></svg>
<div style="left:620.6px;top:282px;width:41.4px;height:15px;background:#dcdcdc;border-top:1px solid #a4a4a4;border-left:1px solid #a8a8a8;border-bottom:1px solid #f4f4f4;border-right:1px solid #ececec;"></div>
<div class="t" style="left:620px;top:285.00px;font-size:10.8px;color:#000;width:38px;text-align:center;transform:scaleX(0.95);transform-origin:center 50%;">Center</div>
<div style="left:617px;top:303.3px;width:48px;height:226.3px;background:#b9b9b9;border-radius:3px;box-shadow:inset 1px 1px 0 #c6c8ca;"></div>
<div style="left:620.5px;top:309px;width:41px;height:14px;background:#dcdcdc;border-top:1px solid #a4a4a4;border-left:1px solid #a8a8a8;border-bottom:1px solid #f4f4f4;border-right:1px solid #ececec;"></div>
<div class="t" style="left:608px;top:312.00px;font-size:10.3px;color:#000;width:41px;text-align:right;letter-spacing:0.8px;">100</div>
<div style="left:621.5px;top:325px;width:41px;height:14px;background:#dcdcdc;border-top:1px solid #a4a4a4;border-left:1px solid #a8a8a8;border-bottom:1px solid #f4f4f4;border-right:1px solid #ececec;"></div>
<div class="t" style="left:608px;top:328.00px;font-size:10.3px;color:#000;width:41px;text-align:right;letter-spacing:0.3px;">0.0</div>
<div style="left:628px;top:351px;width:11px;height:1px;background:#5c5c5c;"></div>
<div style="left:647px;top:351px;width:11px;height:1px;background:#5c5c5c;"></div>
<div style="left:628px;top:367px;width:11px;height:1px;background:#5c5c5c;"></div>
<div style="left:647px;top:367px;width:11px;height:1px;background:#5c5c5c;"></div>
<div style="left:628px;top:381px;width:11px;height:1px;background:#5c5c5c;"></div>
<div style="left:647px;top:381px;width:11px;height:1px;background:#5c5c5c;"></div>
<div style="left:628px;top:396px;width:11px;height:1px;background:#5c5c5c;"></div>
<div style="left:647px;top:396px;width:11px;height:1px;background:#5c5c5c;"></div>
<div style="left:628px;top:411px;width:11px;height:1px;background:#5c5c5c;"></div>
<div style="left:647px;top:411px;width:11px;height:1px;background:#5c5c5c;"></div>
<div style="left:628px;top:439px;width:11px;height:1px;background:#5c5c5c;"></div>
<div style="left:647px;top:439px;width:11px;height:1px;background:#5c5c5c;"></div>
<div style="left:628px;top:465px;width:11px;height:1px;background:#5c5c5c;"></div>
<div style="left:647px;top:465px;width:11px;height:1px;background:#5c5c5c;"></div>
<div style="left:628px;top:485px;width:11px;height:1px;background:#5c5c5c;"></div>
<div style="left:647px;top:485px;width:11px;height:1px;background:#5c5c5c;"></div>
<div style="left:628px;top:502px;width:11px;height:1px;background:#5c5c5c;"></div>
<div style="left:647px;top:502px;width:11px;height:1px;background:#5c5c5c;"></div>
<div style="left:630.8px;top:370px;width:8px;height:1px;background:#8a8a8a;"></div>
<div style="left:647px;top:370px;width:8px;height:1px;background:#8a8a8a;"></div>
<div style="left:630.8px;top:373px;width:8px;height:1px;background:#8a8a8a;"></div>
<div style="left:647px;top:373px;width:8px;height:1px;background:#8a8a8a;"></div>
<div style="left:630.8px;top:376px;width:8px;height:1px;background:#8a8a8a;"></div>
<div style="left:647px;top:376px;width:8px;height:1px;background:#8a8a8a;"></div>
<div style="left:630.8px;top:378px;width:8px;height:1px;background:#8a8a8a;"></div>
<div style="left:647px;top:378px;width:8px;height:1px;background:#8a8a8a;"></div>
<div style="left:630.8px;top:384px;width:8px;height:1px;background:#8a8a8a;"></div>
<div style="left:647px;top:384px;width:8px;height:1px;background:#8a8a8a;"></div>
<div style="left:630.8px;top:387px;width:8px;height:1px;background:#8a8a8a;"></div>
<div style="left:647px;top:387px;width:8px;height:1px;background:#8a8a8a;"></div>
<div style="left:630.8px;top:390px;width:8px;height:1px;background:#8a8a8a;"></div>
<div style="left:647px;top:390px;width:8px;height:1px;background:#8a8a8a;"></div>
<div style="left:630.8px;top:393px;width:8px;height:1px;background:#8a8a8a;"></div>
<div style="left:647px;top:393px;width:8px;height:1px;background:#8a8a8a;"></div>
<div class="t" style="left:621.8px;top:378.00px;font-size:9.5px;color:#7a7a7a;transform:scaleX(0.8);transform-origin:left 50%;">0</div>
<div class="t" style="left:660px;top:378.00px;font-size:9.5px;color:#7a7a7a;transform:scaleX(0.8);transform-origin:left 50%;">0</div>
<div style="left:641px;top:346px;width:1px;height:160px;background:#747474;"></div>
<div style="left:642px;top:346px;width:2px;height:160px;background:#8e8e8e;"></div>
<div style="left:644px;top:346px;width:1px;height:160px;background:#f0f0f0;"></div>
<div style="left:634.1px;top:364.1px;width:16.8px;height:34.7px;background:#000;box-shadow:1px 2px 3px rgba(0,0,0,0.35);"></div>
<svg style="position:absolute;left:634.1px;top:364.1px;overflow:visible" width="17" height="35"><path d="M3.8 5.5 H13.2 C16.2 11 16.2 23.5 13.2 29.2 H3.8 C0.8 23.5 0.8 11 3.8 5.5Z" fill="url(#cap)"/><path d="M2 29.2 H15 L16 34 H1Z" fill="#1e1e1e"/></svg>
<svg style="position:absolute;left:639px;top:513px" width="9" height="11" shape-rendering="crispEdges"><path d="M0 0h7v1h-7zM5 1h2v1h-2zM5 2h2v1h-2zM4 3h2v1h-2zM4 4h2v1h-2zM3 5h2v1h-2zM3 6h2v1h-2zM2 7h2v1h-2zM2 8h2v1h-2zM2 9h2v1h-2zM2 10h2v1h-2z" fill="#2a2a2a"/></svg>
<div style="left:617px;top:533px;width:48px;height:31.5px;background:#b9b9b9;border-radius:3px;box-shadow:inset 1px 1px 0 #c6c8ca;"></div>
<div style="left:620px;top:535px;width:21px;height:12px;background:#d6d6d6;border-top:1px solid #7a7a7a;border-left:1px solid #8a8a8a;border-bottom:1px solid #f4f4f4;"></div>
<div style="left:628px;top:542px;width:3px;height:1px;background:#000;"></div>
<div style="left:641px;top:535px;width:21px;height:12px;background:#d6d6d6;border-top:1px solid #7a7a7a;border-left:1px solid #8a8a8a;border-bottom:1px solid #f4f4f4;border-right:1px solid #eee;"></div>
<div style="left:649px;top:542px;width:3px;height:1px;background:#000;"></div>
<div style="left:620px;top:547px;width:42px;height:14px;background:#dadada;border-top:1px solid #7a7a7a;border-left:1px solid #8a8a8a;border-bottom:1px solid #f8f8f8;border-right:1px solid #eee;"></div>
<div style="left:669px;top:61px;width:47px;height:122px;background:#040404;border-radius:4px;"></div>
<div style="left:673px;top:69px;width:6px;height:3px;background:#521414;"></div>
<div style="left:706px;top:69px;width:6px;height:3px;background:#521414;"></div>
<div style="left:673px;top:75px;width:6px;height:3px;background:#6c5c32;"></div>
<div style="left:706px;top:75px;width:6px;height:3px;background:#6c5c32;"></div>
<div style="left:673px;top:81px;width:6px;height:3px;background:#6c5c32;"></div>
<div style="left:706px;top:81px;width:6px;height:3px;background:#6c5c32;"></div>
<div style="left:673px;top:87px;width:6px;height:3px;background:#6c5c32;"></div>
<div style="left:706px;top:87px;width:6px;height:3px;background:#6c5c32;"></div>
<div style="left:673px;top:93px;width:6px;height:3px;background:#18441a;"></div>
<div style="left:706px;top:93px;width:6px;height:3px;background:#18441a;"></div>
<div style="left:673px;top:99px;width:6px;height:3px;background:#18441a;"></div>
<div style="left:706px;top:99px;width:6px;height:3px;background:#18441a;"></div>
<div style="left:673px;top:105px;width:6px;height:3px;background:#18441a;"></div>
<div style="left:706px;top:105px;width:6px;height:3px;background:#18441a;"></div>
<div style="left:673px;top:111px;width:6px;height:3px;background:#18441a;"></div>
<div style="left:706px;top:111px;width:6px;height:3px;background:#18441a;"></div>
<div style="left:673px;top:117px;width:6px;height:3px;background:#18441a;"></div>
<div style="left:706px;top:117px;width:6px;height:3px;background:#18441a;"></div>
<div style="left:673px;top:123px;width:6px;height:3px;background:#18441a;"></div>
<div style="left:706px;top:123px;width:6px;height:3px;background:#18441a;"></div>
<div style="left:690px;top:70px;width:2px;height:1px;background:#c05050;"></div>
<div style="left:693px;top:70px;width:2px;height:1px;background:#c05050;"></div>
<div class="t" style="left:683px;top:100.00px;font-size:10.8px;color:#cacaca;transform:scaleX(0.86);transform-origin:left 50%;">Gain</div>
<svg style="position:absolute;left:682px;top:114px;overflow:visible" width="20" height="20"><circle cx="10" cy="9.3" r="9.2" fill="url(#knob)"/><path d="M10.2 2.8 V5.4" stroke="#3a3a3a" stroke-width="2.2" stroke-linecap="round"/></svg>
<div style="left:673px;top:138px;width:39px;height:12px;background:#d6d6d6;border-bottom:1px solid #f4f4f4;"></div>
<div class="t" style="left:673px;top:139.00px;font-size:11.2px;color:#000;width:39px;text-align:center;letter-spacing:0.4px;-webkit-text-stroke:0.25px #000;">0.0</div>
<div style="left:673.3px;top:155px;width:11px;height:11px;background:linear-gradient(135deg,#cfcfcf,#9a9a9a);border:1px solid #2a2a2a;border-top-color:#8a8a8a;border-left-color:#8a8a8a;border-radius:2px;"></div>
<div style="left:702.2px;top:155px;width:11px;height:11px;background:linear-gradient(135deg,#cfcfcf,#9a9a9a);border:1px solid #2a2a2a;border-top-color:#8a8a8a;border-left-color:#8a8a8a;border-radius:2px;"></div>
<div class="t" style="left:685.6px;top:154.00px;font-size:10.8px;color:#d4d4d4;">I</div>
<div class="t" style="left:690px;top:154.00px;font-size:10.8px;color:#d4d4d4;transform:scaleX(0.85);transform-origin:left 50%;">nv</div>
<div style="left:675px;top:170px;width:36.5px;height:9.3px;background:linear-gradient(#f59090,#e86c6c);border-bottom:1px solid #902a2a;border-right:1px solid #b04040;"></div>
<div class="t" style="left:675px;top:170.00px;font-size:8.6px;color:#2a0606;width:36px;text-align:center;transform:scaleX(1.1);transform-origin:center 50%;letter-spacing:0.2px;">Stereo</div>
<div style="left:668px;top:186px;width:48px;height:40px;background:#b9b9b9;border-radius:3px;box-shadow:inset 1px 1px 0 #c6c8ca;"></div>
<div style="left:672px;top:189px;width:41px;height:14px;background:#dddcd0;border-top:1px solid #808080;border-left:1px solid #8a8a8a;border-bottom:1px solid #fafafa;border-right:1px solid #f0f0f0;"></div>
<div class="t" style="left:673.5px;top:191.00px;font-size:10.8px;color:#000;">Master</div>
<div style="left:708.6px;top:192.3px;width:1.6px;height:3.6px;background:#000;transform:rotate(-35deg);"></div>
<div style="left:672px;top:207px;width:41px;height:14px;background:#dddcd0;border-top:1px solid #808080;border-left:1px solid #8a8a8a;border-bottom:1px solid #fafafa;border-right:1px solid #f0f0f0;"></div>
<div class="t" style="left:673.5px;top:209.00px;font-size:10.8px;color:#000;">Master</div>
<div style="left:708.6px;top:210.3px;width:1.6px;height:3.6px;background:#000;transform:rotate(-35deg);"></div>
<div style="left:668px;top:229px;width:48px;height:25px;background:#b9b9b9;border-radius:3px;box-shadow:inset 1px 1px 0 #c6c8ca;"></div>
<div style="left:673.3px;top:233px;width:17.3px;height:17px;background:#c4c4c4;border:1px solid #2a2a2a;border-radius:3px;box-shadow:inset 0 0 0 1px #747474, inset 2px 2px 0 #dcdcdc;"></div>
<div class="t" style="left:673.5999999999999px;top:235.00px;font-size:13px;color:#1a1a1a;font-weight:bold;width:17.3px;text-align:center;transform:scaleX(0.92);transform-origin:center 50%;">M</div>
<div style="left:693.5px;top:233px;width:17.3px;height:17px;background:#c4c4c4;border:1px solid #2a2a2a;border-radius:3px;box-shadow:inset 0 0 0 1px #747474, inset 2px 2px 0 #dcdcdc;"></div>
<div class="t" style="left:693.8px;top:235.00px;font-size:13px;color:#1a1a1a;font-weight:bold;width:17.3px;text-align:center;transform:scaleX(0.92);transform-origin:center 50%;">S</div>
<div style="left:668px;top:257px;width:48px;height:43px;background:#b9b9b9;border-radius:3px;box-shadow:inset 1px 1px 0 #c6c8ca;"></div>
<svg style="position:absolute;left:680.3px;top:260.5px;overflow:visible" width="19" height="19"><circle cx="8.7" cy="9" r="8.7" fill="url(#knob2)" stroke="#6c7074" stroke-width="0.7"/><path d="M8.7 2.3 V5" stroke="#2a2a2a" stroke-width="1.8" stroke-linecap="round"/></svg>
<div style="left:671.6px;top:282px;width:41.4px;height:15px;background:#dcdcdc;border-top:1px solid #a4a4a4;border-left:1px solid #a8a8a8;border-bottom:1px solid #f4f4f4;border-right:1px solid #ececec;"></div>
<div class="t" style="left:671px;top:285.00px;font-size:10.8px;color:#000;width:38px;text-align:center;transform:scaleX(0.95);transform-origin:center 50%;">Center</div>
<div style="left:668px;top:303.3px;width:48px;height:226.3px;background:#b9b9b9;border-radius:3px;box-shadow:inset 1px 1px 0 #c6c8ca;"></div>
<div style="left:671.5px;top:309px;width:41px;height:14px;background:#dcdcdc;border-top:1px solid #a4a4a4;border-left:1px solid #a8a8a8;border-bottom:1px solid #f4f4f4;border-right:1px solid #ececec;"></div>
<div class="t" style="left:659px;top:312.00px;font-size:10.3px;color:#000;width:41px;text-align:right;letter-spacing:0.8px;">100</div>
<div style="left:672.5px;top:325px;width:41px;height:14px;background:#dcdcdc;border-top:1px solid #a4a4a4;border-left:1px solid #a8a8a8;border-bottom:1px solid #f4f4f4;border-right:1px solid #ececec;"></div>
<div class="t" style="left:659px;top:328.00px;font-size:10.3px;color:#000;width:41px;text-align:right;letter-spacing:0.3px;">0.0</div>
<div style="left:679px;top:351px;width:11px;height:1px;background:#5c5c5c;"></div>
<div style="left:698px;top:351px;width:11px;height:1px;background:#5c5c5c;"></div>
<div style="left:679px;top:367px;width:11px;height:1px;background:#5c5c5c;"></div>
<div style="left:698px;top:367px;width:11px;height:1px;background:#5c5c5c;"></div>
<div style="left:679px;top:381px;width:11px;height:1px;background:#5c5c5c;"></div>
<div style="left:698px;top:381px;width:11px;height:1px;background:#5c5c5c;"></div>
<div style="left:679px;top:396px;width:11px;height:1px;background:#5c5c5c;"></div>
<div style="left:698px;top:396px;width:11px;height:1px;background:#5c5c5c;"></div>
<div style="left:679px;top:411px;width:11px;height:1px;background:#5c5c5c;"></div>
<div style="left:698px;top:411px;width:11px;height:1px;background:#5c5c5c;"></div>
<div style="left:679px;top:439px;width:11px;height:1px;background:#5c5c5c;"></div>
<div style="left:698px;top:439px;width:11px;height:1px;background:#5c5c5c;"></div>
<div style="left:679px;top:465px;width:11px;height:1px;background:#5c5c5c;"></div>
<div style="left:698px;top:465px;width:11px;height:1px;background:#5c5c5c;"></div>
<div style="left:679px;top:485px;width:11px;height:1px;background:#5c5c5c;"></div>
<div style="left:698px;top:485px;width:11px;height:1px;background:#5c5c5c;"></div>
<div style="left:679px;top:502px;width:11px;height:1px;background:#5c5c5c;"></div>
<div style="left:698px;top:502px;width:11px;height:1px;background:#5c5c5c;"></div>
<div style="left:681.8px;top:370px;width:8px;height:1px;background:#8a8a8a;"></div>
<div style="left:698px;top:370px;width:8px;height:1px;background:#8a8a8a;"></div>
<div style="left:681.8px;top:373px;width:8px;height:1px;background:#8a8a8a;"></div>
<div style="left:698px;top:373px;width:8px;height:1px;background:#8a8a8a;"></div>
<div style="left:681.8px;top:376px;width:8px;height:1px;background:#8a8a8a;"></div>
<div style="left:698px;top:376px;width:8px;height:1px;background:#8a8a8a;"></div>
<div style="left:681.8px;top:378px;width:8px;height:1px;background:#8a8a8a;"></div>
<div style="left:698px;top:378px;width:8px;height:1px;background:#8a8a8a;"></div>
<div style="left:681.8px;top:384px;width:8px;height:1px;background:#8a8a8a;"></div>
<div style="left:698px;top:384px;width:8px;height:1px;background:#8a8a8a;"></div>
<div style="left:681.8px;top:387px;width:8px;height:1px;background:#8a8a8a;"></div>
<div style="left:698px;top:387px;width:8px;height:1px;background:#8a8a8a;"></div>
<div style="left:681.8px;top:390px;width:8px;height:1px;background:#8a8a8a;"></div>
<div style="left:698px;top:390px;width:8px;height:1px;background:#8a8a8a;"></div>
<div style="left:681.8px;top:393px;width:8px;height:1px;background:#8a8a8a;"></div>
<div style="left:698px;top:393px;width:8px;height:1px;background:#8a8a8a;"></div>
<div class="t" style="left:672.8px;top:378.00px;font-size:9.5px;color:#7a7a7a;transform:scaleX(0.8);transform-origin:left 50%;">0</div>
<div class="t" style="left:711px;top:378.00px;font-size:9.5px;color:#7a7a7a;transform:scaleX(0.8);transform-origin:left 50%;">0</div>
<div style="left:692px;top:346px;width:1px;height:160px;background:#747474;"></div>
<div style="left:693px;top:346px;width:2px;height:160px;background:#8e8e8e;"></div>
<div style="left:695px;top:346px;width:1px;height:160px;background:#f0f0f0;"></div>
<div style="left:685.1px;top:364.1px;width:16.8px;height:34.7px;background:#000;box-shadow:1px 2px 3px rgba(0,0,0,0.35);"></div>
<svg style="position:absolute;left:685.1px;top:364.1px;overflow:visible" width="17" height="35"><path d="M3.8 5.5 H13.2 C16.2 11 16.2 23.5 13.2 29.2 H3.8 C0.8 23.5 0.8 11 3.8 5.5Z" fill="url(#cap)"/><path d="M2 29.2 H15 L16 34 H1Z" fill="#1e1e1e"/></svg>
<svg style="position:absolute;left:690px;top:513px" width="9" height="11" shape-rendering="crispEdges"><path d="M1 0h5v1h-5zM0 1h2v1h-2zM5 1h2v1h-2zM0 2h2v1h-2zM5 2h2v1h-2zM0 3h2v1h-2zM5 3h2v1h-2zM1 4h5v1h-5zM0 5h2v1h-2zM5 5h2v1h-2zM0 6h2v1h-2zM5 6h2v1h-2zM0 7h2v1h-2zM5 7h2v1h-2zM0 8h2v1h-2zM5 8h2v1h-2zM0 9h2v1h-2zM5 9h2v1h-2zM1 10h5v1h-5z" fill="#2a2a2a"/></svg>
<div style="left:668px;top:533px;width:48px;height:31.5px;background:#b9b9b9;border-radius:3px;box-shadow:inset 1px 1px 0 #c6c8ca;"></div>
<div style="left:671px;top:535px;width:21px;height:12px;background:#d6d6d6;border-top:1px solid #7a7a7a;border-left:1px solid #8a8a8a;border-bottom:1px solid #f4f4f4;"></div>
<div style="left:679px;top:542px;width:3px;height:1px;background:#000;"></div>
<div style="left:692px;top:535px;width:21px;height:12px;background:#d6d6d6;border-top:1px solid #7a7a7a;border-left:1px solid #8a8a8a;border-bottom:1px solid #f4f4f4;border-right:1px solid #eee;"></div>
<div style="left:700px;top:542px;width:3px;height:1px;background:#000;"></div>
<div style="left:671px;top:547px;width:42px;height:14px;background:#dadada;border-top:1px solid #7a7a7a;border-left:1px solid #8a8a8a;border-bottom:1px solid #f8f8f8;border-right:1px solid #eee;"></div>
<div style="left:720px;top:61px;width:47px;height:122px;background:#040404;border-radius:4px;"></div>
<div style="left:724px;top:69px;width:6px;height:3px;background:#521414;"></div>
<div style="left:757px;top:69px;width:6px;height:3px;background:#521414;"></div>
<div style="left:724px;top:75px;width:6px;height:3px;background:#6c5c32;"></div>
<div style="left:757px;top:75px;width:6px;height:3px;background:#6c5c32;"></div>
<div style="left:724px;top:81px;width:6px;height:3px;background:#6c5c32;"></div>
<div style="left:757px;top:81px;width:6px;height:3px;background:#6c5c32;"></div>
<div style="left:724px;top:87px;width:6px;height:3px;background:#6c5c32;"></div>
<div style="left:757px;top:87px;width:6px;height:3px;background:#6c5c32;"></div>
<div style="left:724px;top:93px;width:6px;height:3px;background:#18441a;"></div>
<div style="left:757px;top:93px;width:6px;height:3px;background:#18441a;"></div>
<div style="left:724px;top:99px;width:6px;height:3px;background:#18441a;"></div>
<div style="left:757px;top:99px;width:6px;height:3px;background:#18441a;"></div>
<div style="left:724px;top:105px;width:6px;height:3px;background:#18441a;"></div>
<div style="left:757px;top:105px;width:6px;height:3px;background:#18441a;"></div>
<div style="left:724px;top:111px;width:6px;height:3px;background:#18441a;"></div>
<div style="left:757px;top:111px;width:6px;height:3px;background:#18441a;"></div>
<div style="left:724px;top:117px;width:6px;height:3px;background:#18441a;"></div>
<div style="left:757px;top:117px;width:6px;height:3px;background:#18441a;"></div>
<div style="left:724px;top:123px;width:6px;height:3px;background:#18441a;"></div>
<div style="left:757px;top:123px;width:6px;height:3px;background:#18441a;"></div>
<div style="left:741px;top:70px;width:2px;height:1px;background:#c05050;"></div>
<div style="left:744px;top:70px;width:2px;height:1px;background:#c05050;"></div>
<div class="t" style="left:734px;top:100.00px;font-size:10.8px;color:#cacaca;transform:scaleX(0.86);transform-origin:left 50%;">Gain</div>
<svg style="position:absolute;left:733px;top:114px;overflow:visible" width="20" height="20"><circle cx="10" cy="9.3" r="9.2" fill="url(#knob)"/><path d="M10.2 2.8 V5.4" stroke="#3a3a3a" stroke-width="2.2" stroke-linecap="round"/></svg>
<div style="left:724px;top:138px;width:39px;height:12px;background:#d6d6d6;border-bottom:1px solid #f4f4f4;"></div>
<div class="t" style="left:724px;top:139.00px;font-size:11.2px;color:#000;width:39px;text-align:center;letter-spacing:0.4px;-webkit-text-stroke:0.25px #000;">0.0</div>
<div style="left:724.3px;top:155px;width:11px;height:11px;background:linear-gradient(135deg,#cfcfcf,#9a9a9a);border:1px solid #2a2a2a;border-top-color:#8a8a8a;border-left-color:#8a8a8a;border-radius:2px;"></div>
<div style="left:753.2px;top:155px;width:11px;height:11px;background:linear-gradient(135deg,#cfcfcf,#9a9a9a);border:1px solid #2a2a2a;border-top-color:#8a8a8a;border-left-color:#8a8a8a;border-radius:2px;"></div>
<div class="t" style="left:736.6px;top:154.00px;font-size:10.8px;color:#d4d4d4;">I</div>
<div class="t" style="left:741px;top:154.00px;font-size:10.8px;color:#d4d4d4;transform:scaleX(0.85);transform-origin:left 50%;">nv</div>
<div style="left:726px;top:170px;width:36.5px;height:9.3px;background:linear-gradient(#f59090,#e86c6c);border-bottom:1px solid #902a2a;border-right:1px solid #b04040;"></div>
<div class="t" style="left:726px;top:170.00px;font-size:8.6px;color:#2a0606;width:36px;text-align:center;transform:scaleX(1.1);transform-origin:center 50%;letter-spacing:0.2px;">Stereo</div>
<div style="left:719px;top:186px;width:48px;height:40px;background:#b9b9b9;border-radius:3px;box-shadow:inset 1px 1px 0 #c6c8ca;"></div>
<div style="left:723px;top:189px;width:41px;height:14px;background:#dddcd0;border-top:1px solid #808080;border-left:1px solid #8a8a8a;border-bottom:1px solid #fafafa;border-right:1px solid #f0f0f0;"></div>
<div class="t" style="left:724.5px;top:191.00px;font-size:10.8px;color:#000;">Master</div>
<div style="left:759.6px;top:192.3px;width:1.6px;height:3.6px;background:#000;transform:rotate(-35deg);"></div>
<div style="left:723px;top:207px;width:41px;height:14px;background:#dddcd0;border-top:1px solid #808080;border-left:1px solid #8a8a8a;border-bottom:1px solid #fafafa;border-right:1px solid #f0f0f0;"></div>
<div class="t" style="left:724.5px;top:209.00px;font-size:10.8px;color:#000;">Master</div>
<div style="left:759.6px;top:210.3px;width:1.6px;height:3.6px;background:#000;transform:rotate(-35deg);"></div>
<div style="left:719px;top:229px;width:48px;height:25px;background:#b9b9b9;border-radius:3px;box-shadow:inset 1px 1px 0 #c6c8ca;"></div>
<div style="left:724.3px;top:233px;width:17.3px;height:17px;background:#c4c4c4;border:1px solid #2a2a2a;border-radius:3px;box-shadow:inset 0 0 0 1px #747474, inset 2px 2px 0 #dcdcdc;"></div>
<div class="t" style="left:724.5999999999999px;top:235.00px;font-size:13px;color:#1a1a1a;font-weight:bold;width:17.3px;text-align:center;transform:scaleX(0.92);transform-origin:center 50%;">M</div>
<div style="left:744.5px;top:233px;width:17.3px;height:17px;background:#c4c4c4;border:1px solid #2a2a2a;border-radius:3px;box-shadow:inset 0 0 0 1px #747474, inset 2px 2px 0 #dcdcdc;"></div>
<div class="t" style="left:744.8px;top:235.00px;font-size:13px;color:#1a1a1a;font-weight:bold;width:17.3px;text-align:center;transform:scaleX(0.92);transform-origin:center 50%;">S</div>
<div style="left:719px;top:257px;width:48px;height:43px;background:#b9b9b9;border-radius:3px;box-shadow:inset 1px 1px 0 #c6c8ca;"></div>
<svg style="position:absolute;left:731.3px;top:260.5px;overflow:visible" width="19" height="19"><circle cx="8.7" cy="9" r="8.7" fill="url(#knob2)" stroke="#6c7074" stroke-width="0.7"/><path d="M8.7 2.3 V5" stroke="#2a2a2a" stroke-width="1.8" stroke-linecap="round"/></svg>
<div style="left:722.6px;top:282px;width:41.4px;height:15px;background:#dcdcdc;border-top:1px solid #a4a4a4;border-left:1px solid #a8a8a8;border-bottom:1px solid #f4f4f4;border-right:1px solid #ececec;"></div>
<div class="t" style="left:722px;top:285.00px;font-size:10.8px;color:#000;width:38px;text-align:center;transform:scaleX(0.95);transform-origin:center 50%;">Center</div>
<div style="left:719px;top:303.3px;width:48px;height:226.3px;background:#b9b9b9;border-radius:3px;box-shadow:inset 1px 1px 0 #c6c8ca;"></div>
<div style="left:722.5px;top:309px;width:41px;height:14px;background:#dcdcdc;border-top:1px solid #a4a4a4;border-left:1px solid #a8a8a8;border-bottom:1px solid #f4f4f4;border-right:1px solid #ececec;"></div>
<div class="t" style="left:710px;top:312.00px;font-size:10.3px;color:#000;width:41px;text-align:right;letter-spacing:0.8px;">100</div>
<div style="left:723.5px;top:325px;width:41px;height:14px;background:#dcdcdc;border-top:1px solid #a4a4a4;border-left:1px solid #a8a8a8;border-bottom:1px solid #f4f4f4;border-right:1px solid #ececec;"></div>
<div class="t" style="left:710px;top:328.00px;font-size:10.3px;color:#000;width:41px;text-align:right;letter-spacing:0.3px;">0.0</div>
<div style="left:730px;top:351px;width:11px;height:1px;background:#5c5c5c;"></div>
<div style="left:749px;top:351px;width:11px;height:1px;background:#5c5c5c;"></div>
<div style="left:730px;top:367px;width:11px;height:1px;background:#5c5c5c;"></div>
<div style="left:749px;top:367px;width:11px;height:1px;background:#5c5c5c;"></div>
<div style="left:730px;top:381px;width:11px;height:1px;background:#5c5c5c;"></div>
<div style="left:749px;top:381px;width:11px;height:1px;background:#5c5c5c;"></div>
<div style="left:730px;top:396px;width:11px;height:1px;background:#5c5c5c;"></div>
<div style="left:749px;top:396px;width:11px;height:1px;background:#5c5c5c;"></div>
<div style="left:730px;top:411px;width:11px;height:1px;background:#5c5c5c;"></div>
<div style="left:749px;top:411px;width:11px;height:1px;background:#5c5c5c;"></div>
<div style="left:730px;top:439px;width:11px;height:1px;background:#5c5c5c;"></div>
<div style="left:749px;top:439px;width:11px;height:1px;background:#5c5c5c;"></div>
<div style="left:730px;top:465px;width:11px;height:1px;background:#5c5c5c;"></div>
<div style="left:749px;top:465px;width:11px;height:1px;background:#5c5c5c;"></div>
<div style="left:730px;top:485px;width:11px;height:1px;background:#5c5c5c;"></div>
<div style="left:749px;top:485px;width:11px;height:1px;background:#5c5c5c;"></div>
<div style="left:730px;top:502px;width:11px;height:1px;background:#5c5c5c;"></div>
<div style="left:749px;top:502px;width:11px;height:1px;background:#5c5c5c;"></div>
<div style="left:732.8px;top:370px;width:8px;height:1px;background:#8a8a8a;"></div>
<div style="left:749px;top:370px;width:8px;height:1px;background:#8a8a8a;"></div>
<div style="left:732.8px;top:373px;width:8px;height:1px;background:#8a8a8a;"></div>
<div style="left:749px;top:373px;width:8px;height:1px;background:#8a8a8a;"></div>
<div style="left:732.8px;top:376px;width:8px;height:1px;background:#8a8a8a;"></div>
<div style="left:749px;top:376px;width:8px;height:1px;background:#8a8a8a;"></div>
<div style="left:732.8px;top:378px;width:8px;height:1px;background:#8a8a8a;"></div>
<div style="left:749px;top:378px;width:8px;height:1px;background:#8a8a8a;"></div>
<div style="left:732.8px;top:384px;width:8px;height:1px;background:#8a8a8a;"></div>
<div style="left:749px;top:384px;width:8px;height:1px;background:#8a8a8a;"></div>
<div style="left:732.8px;top:387px;width:8px;height:1px;background:#8a8a8a;"></div>
<div style="left:749px;top:387px;width:8px;height:1px;background:#8a8a8a;"></div>
<div style="left:732.8px;top:390px;width:8px;height:1px;background:#8a8a8a;"></div>
<div style="left:749px;top:390px;width:8px;height:1px;background:#8a8a8a;"></div>
<div style="left:732.8px;top:393px;width:8px;height:1px;background:#8a8a8a;"></div>
<div style="left:749px;top:393px;width:8px;height:1px;background:#8a8a8a;"></div>
<div class="t" style="left:723.8px;top:378.00px;font-size:9.5px;color:#7a7a7a;transform:scaleX(0.8);transform-origin:left 50%;">0</div>
<div class="t" style="left:762px;top:378.00px;font-size:9.5px;color:#7a7a7a;transform:scaleX(0.8);transform-origin:left 50%;">0</div>
<div style="left:743px;top:346px;width:1px;height:160px;background:#747474;"></div>
<div style="left:744px;top:346px;width:2px;height:160px;background:#8e8e8e;"></div>
<div style="left:746px;top:346px;width:1px;height:160px;background:#f0f0f0;"></div>
<div style="left:736.1px;top:364.1px;width:16.8px;height:34.7px;background:#000;box-shadow:1px 2px 3px rgba(0,0,0,0.35);"></div>
<svg style="position:absolute;left:736.1px;top:364.1px;overflow:visible" width="17" height="35"><path d="M3.8 5.5 H13.2 C16.2 11 16.2 23.5 13.2 29.2 H3.8 C0.8 23.5 0.8 11 3.8 5.5Z" fill="url(#cap)"/><path d="M2 29.2 H15 L16 34 H1Z" fill="#1e1e1e"/></svg>
<svg style="position:absolute;left:741px;top:513px" width="9" height="11" shape-rendering="crispEdges"><path d="M1 0h5v1h-5zM0 1h2v1h-2zM5 1h2v1h-2zM0 2h2v1h-2zM5 2h2v1h-2zM0 3h2v1h-2zM5 3h2v1h-2zM0 4h2v1h-2zM5 4h2v1h-2zM1 5h6v1h-6zM5 6h2v1h-2zM5 7h2v1h-2zM5 8h2v1h-2zM0 9h2v1h-2zM4 9h2v1h-2zM1 10h4v1h-4z" fill="#2a2a2a"/></svg>
<div style="left:719px;top:533px;width:48px;height:31.5px;background:#b9b9b9;border-radius:3px;box-shadow:inset 1px 1px 0 #c6c8ca;"></div>
<div style="left:722px;top:535px;width:21px;height:12px;background:#d6d6d6;border-top:1px solid #7a7a7a;border-left:1px solid #8a8a8a;border-bottom:1px solid #f4f4f4;"></div>
<div style="left:730px;top:542px;width:3px;height:1px;background:#000;"></div>
<div style="left:743px;top:535px;width:21px;height:12px;background:#d6d6d6;border-top:1px solid #7a7a7a;border-left:1px solid #8a8a8a;border-bottom:1px solid #f4f4f4;border-right:1px solid #eee;"></div>
<div style="left:751px;top:542px;width:3px;height:1px;background:#000;"></div>
<div style="left:722px;top:547px;width:42px;height:14px;background:#dadada;border-top:1px solid #7a7a7a;border-left:1px solid #8a8a8a;border-bottom:1px solid #f8f8f8;border-right:1px solid #eee;"></div>
<div style="left:771px;top:61px;width:47px;height:122px;background:#040404;border-radius:4px;"></div>
<div style="left:775px;top:69px;width:6px;height:3px;background:#521414;"></div>
<div style="left:808px;top:69px;width:6px;height:3px;background:#521414;"></div>
<div style="left:775px;top:75px;width:6px;height:3px;background:#6c5c32;"></div>
<div style="left:808px;top:75px;width:6px;height:3px;background:#6c5c32;"></div>
<div style="left:775px;top:81px;width:6px;height:3px;background:#6c5c32;"></div>
<div style="left:808px;top:81px;width:6px;height:3px;background:#6c5c32;"></div>
<div style="left:775px;top:87px;width:6px;height:3px;background:#6c5c32;"></div>
<div style="left:808px;top:87px;width:6px;height:3px;background:#6c5c32;"></div>
<div style="left:775px;top:93px;width:6px;height:3px;background:#18441a;"></div>
<div style="left:808px;top:93px;width:6px;height:3px;background:#18441a;"></div>
<div style="left:775px;top:99px;width:6px;height:3px;background:#18441a;"></div>
<div style="left:808px;top:99px;width:6px;height:3px;background:#18441a;"></div>
<div style="left:775px;top:105px;width:6px;height:3px;background:#18441a;"></div>
<div style="left:808px;top:105px;width:6px;height:3px;background:#18441a;"></div>
<div style="left:775px;top:111px;width:6px;height:3px;background:#18441a;"></div>
<div style="left:808px;top:111px;width:6px;height:3px;background:#18441a;"></div>
<div style="left:775px;top:117px;width:6px;height:3px;background:#18441a;"></div>
<div style="left:808px;top:117px;width:6px;height:3px;background:#18441a;"></div>
<div style="left:775px;top:123px;width:6px;height:3px;background:#18441a;"></div>
<div style="left:808px;top:123px;width:6px;height:3px;background:#18441a;"></div>
<div style="left:792px;top:70px;width:2px;height:1px;background:#c05050;"></div>
<div style="left:795px;top:70px;width:2px;height:1px;background:#c05050;"></div>
<div class="t" style="left:785px;top:100.00px;font-size:10.8px;color:#cacaca;transform:scaleX(0.86);transform-origin:left 50%;">Gain</div>
<svg style="position:absolute;left:784px;top:114px;overflow:visible" width="20" height="20"><circle cx="10" cy="9.3" r="9.2" fill="url(#knob)"/><path d="M10.2 2.8 V5.4" stroke="#3a3a3a" stroke-width="2.2" stroke-linecap="round"/></svg>
<div style="left:775px;top:138px;width:39px;height:12px;background:#d6d6d6;border-bottom:1px solid #f4f4f4;"></div>
<div class="t" style="left:775px;top:139.00px;font-size:11.2px;color:#000;width:39px;text-align:center;letter-spacing:0.4px;-webkit-text-stroke:0.25px #000;">0.0</div>
<div style="left:775.3px;top:155px;width:11px;height:11px;background:linear-gradient(135deg,#cfcfcf,#9a9a9a);border:1px solid #2a2a2a;border-top-color:#8a8a8a;border-left-color:#8a8a8a;border-radius:2px;"></div>
<div style="left:804.2px;top:155px;width:11px;height:11px;background:linear-gradient(135deg,#cfcfcf,#9a9a9a);border:1px solid #2a2a2a;border-top-color:#8a8a8a;border-left-color:#8a8a8a;border-radius:2px;"></div>
<div class="t" style="left:787.6px;top:154.00px;font-size:10.8px;color:#d4d4d4;">I</div>
<div class="t" style="left:792px;top:154.00px;font-size:10.8px;color:#d4d4d4;transform:scaleX(0.85);transform-origin:left 50%;">nv</div>
<div style="left:777px;top:170px;width:36.5px;height:9.3px;background:linear-gradient(#f59090,#e86c6c);border-bottom:1px solid #902a2a;border-right:1px solid #b04040;"></div>
<div class="t" style="left:777px;top:170.00px;font-size:8.6px;color:#2a0606;width:36px;text-align:center;transform:scaleX(1.1);transform-origin:center 50%;letter-spacing:0.2px;">Stereo</div>
<div style="left:770px;top:186px;width:48px;height:40px;background:#b9b9b9;border-radius:3px;box-shadow:inset 1px 1px 0 #c6c8ca;"></div>
<div style="left:774px;top:189px;width:41px;height:14px;background:#dddcd0;border-top:1px solid #808080;border-left:1px solid #8a8a8a;border-bottom:1px solid #fafafa;border-right:1px solid #f0f0f0;"></div>
<div class="t" style="left:775.5px;top:191.00px;font-size:10.8px;color:#000;">Master</div>
<div style="left:810.6px;top:192.3px;width:1.6px;height:3.6px;background:#000;transform:rotate(-35deg);"></div>
<div style="left:774px;top:207px;width:41px;height:14px;background:#dddcd0;border-top:1px solid #808080;border-left:1px solid #8a8a8a;border-bottom:1px solid #fafafa;border-right:1px solid #f0f0f0;"></div>
<div class="t" style="left:775.5px;top:209.00px;font-size:10.8px;color:#000;">Master</div>
<div style="left:810.6px;top:210.3px;width:1.6px;height:3.6px;background:#000;transform:rotate(-35deg);"></div>
<div style="left:770px;top:229px;width:48px;height:25px;background:#b9b9b9;border-radius:3px;box-shadow:inset 1px 1px 0 #c6c8ca;"></div>
<div style="left:775.3px;top:233px;width:17.3px;height:17px;background:#c4c4c4;border:1px solid #2a2a2a;border-radius:3px;box-shadow:inset 0 0 0 1px #747474, inset 2px 2px 0 #dcdcdc;"></div>
<div class="t" style="left:775.5999999999999px;top:235.00px;font-size:13px;color:#1a1a1a;font-weight:bold;width:17.3px;text-align:center;transform:scaleX(0.92);transform-origin:center 50%;">M</div>
<div style="left:795.5px;top:233px;width:17.3px;height:17px;background:#c4c4c4;border:1px solid #2a2a2a;border-radius:3px;box-shadow:inset 0 0 0 1px #747474, inset 2px 2px 0 #dcdcdc;"></div>
<div class="t" style="left:795.8px;top:235.00px;font-size:13px;color:#1a1a1a;font-weight:bold;width:17.3px;text-align:center;transform:scaleX(0.92);transform-origin:center 50%;">S</div>
<div style="left:770px;top:257px;width:48px;height:43px;background:#b9b9b9;border-radius:3px;box-shadow:inset 1px 1px 0 #c6c8ca;"></div>
<svg style="position:absolute;left:782.3px;top:260.5px;overflow:visible" width="19" height="19"><circle cx="8.7" cy="9" r="8.7" fill="url(#knob2)" stroke="#6c7074" stroke-width="0.7"/><path d="M8.7 2.3 V5" stroke="#2a2a2a" stroke-width="1.8" stroke-linecap="round"/></svg>
<div style="left:773.6px;top:282px;width:41.4px;height:15px;background:#dcdcdc;border-top:1px solid #a4a4a4;border-left:1px solid #a8a8a8;border-bottom:1px solid #f4f4f4;border-right:1px solid #ececec;"></div>
<div class="t" style="left:773px;top:285.00px;font-size:10.8px;color:#000;width:38px;text-align:center;transform:scaleX(0.95);transform-origin:center 50%;">Center</div>
<div style="left:770px;top:303.3px;width:48px;height:226.3px;background:#b9b9b9;border-radius:3px;box-shadow:inset 1px 1px 0 #c6c8ca;"></div>
<div style="left:773.5px;top:309px;width:41px;height:14px;background:#dcdcdc;border-top:1px solid #a4a4a4;border-left:1px solid #a8a8a8;border-bottom:1px solid #f4f4f4;border-right:1px solid #ececec;"></div>
<div class="t" style="left:761px;top:312.00px;font-size:10.3px;color:#000;width:41px;text-align:right;letter-spacing:0.8px;">100</div>
<div style="left:774.5px;top:325px;width:41px;height:14px;background:#dcdcdc;border-top:1px solid #a4a4a4;border-left:1px solid #a8a8a8;border-bottom:1px solid #f4f4f4;border-right:1px solid #ececec;"></div>
<div class="t" style="left:761px;top:328.00px;font-size:10.3px;color:#000;width:41px;text-align:right;letter-spacing:0.3px;">0.0</div>
<div style="left:781px;top:351px;width:11px;height:1px;background:#5c5c5c;"></div>
<div style="left:800px;top:351px;width:11px;height:1px;background:#5c5c5c;"></div>
<div style="left:781px;top:367px;width:11px;height:1px;background:#5c5c5c;"></div>
<div style="left:800px;top:367px;width:11px;height:1px;background:#5c5c5c;"></div>
<div style="left:781px;top:381px;width:11px;height:1px;background:#5c5c5c;"></div>
<div style="left:800px;top:381px;width:11px;height:1px;background:#5c5c5c;"></div>
<div style="left:781px;top:396px;width:11px;height:1px;background:#5c5c5c;"></div>
<div style="left:800px;top:396px;width:11px;height:1px;background:#5c5c5c;"></div>
<div style="left:781px;top:411px;width:11px;height:1px;background:#5c5c5c;"></div>
<div style="left:800px;top:411px;width:11px;height:1px;background:#5c5c5c;"></div>
<div style="left:781px;top:439px;width:11px;height:1px;background:#5c5c5c;"></div>
<div style="left:800px;top:439px;width:11px;height:1px;background:#5c5c5c;"></div>
<div style="left:781px;top:465px;width:11px;height:1px;background:#5c5c5c;"></div>
<div style="left:800px;top:465px;width:11px;height:1px;background:#5c5c5c;"></div>
<div style="left:781px;top:485px;width:11px;height:1px;background:#5c5c5c;"></div>
<div style="left:800px;top:485px;width:11px;height:1px;background:#5c5c5c;"></div>
<div style="left:781px;top:502px;width:11px;height:1px;background:#5c5c5c;"></div>
<div style="left:800px;top:502px;width:11px;height:1px;background:#5c5c5c;"></div>
<div style="left:783.8px;top:370px;width:8px;height:1px;background:#8a8a8a;"></div>
<div style="left:800px;top:370px;width:8px;height:1px;background:#8a8a8a;"></div>
<div style="left:783.8px;top:373px;width:8px;height:1px;background:#8a8a8a;"></div>
<div style="left:800px;top:373px;width:8px;height:1px;background:#8a8a8a;"></div>
<div style="left:783.8px;top:376px;width:8px;height:1px;background:#8a8a8a;"></div>
<div style="left:800px;top:376px;width:8px;height:1px;background:#8a8a8a;"></div>
<div style="left:783.8px;top:378px;width:8px;height:1px;background:#8a8a8a;"></div>
<div style="left:800px;top:378px;width:8px;height:1px;background:#8a8a8a;"></div>
<div style="left:783.8px;top:384px;width:8px;height:1px;background:#8a8a8a;"></div>
<div style="left:800px;top:384px;width:8px;height:1px;background:#8a8a8a;"></div>
<div style="left:783.8px;top:387px;width:8px;height:1px;background:#8a8a8a;"></div>
<div style="left:800px;top:387px;width:8px;height:1px;background:#8a8a8a;"></div>
<div style="left:783.8px;top:390px;width:8px;height:1px;background:#8a8a8a;"></div>
<div style="left:800px;top:390px;width:8px;height:1px;background:#8a8a8a;"></div>
<div style="left:783.8px;top:393px;width:8px;height:1px;background:#8a8a8a;"></div>
<div style="left:800px;top:393px;width:8px;height:1px;background:#8a8a8a;"></div>
<div class="t" style="left:774.8px;top:378.00px;font-size:9.5px;color:#7a7a7a;transform:scaleX(0.8);transform-origin:left 50%;">0</div>
<div class="t" style="left:813px;top:378.00px;font-size:9.5px;color:#7a7a7a;transform:scaleX(0.8);transform-origin:left 50%;">0</div>
<div style="left:794px;top:346px;width:1px;height:160px;background:#747474;"></div>
<div style="left:795px;top:346px;width:2px;height:160px;background:#8e8e8e;"></div>
<div style="left:797px;top:346px;width:1px;height:160px;background:#f0f0f0;"></div>
<div style="left:787.1px;top:364.1px;width:16.8px;height:34.7px;background:#000;box-shadow:1px 2px 3px rgba(0,0,0,0.35);"></div>
<svg style="position:absolute;left:787.1px;top:364.1px;overflow:visible" width="17" height="35"><path d="M3.8 5.5 H13.2 C16.2 11 16.2 23.5 13.2 29.2 H3.8 C0.8 23.5 0.8 11 3.8 5.5Z" fill="url(#cap)"/><path d="M2 29.2 H15 L16 34 H1Z" fill="#1e1e1e"/></svg>
<svg style="position:absolute;left:790px;top:513px" width="16" height="11" shape-rendering="crispEdges"><path d="M3 0h2v1h-2zM2 1h3v1h-3zM1 2h4v1h-4zM0 3h2v1h-2zM3 3h2v1h-2zM3 4h2v1h-2zM3 5h2v1h-2zM3 6h2v1h-2zM3 7h2v1h-2zM3 8h2v1h-2zM3 9h2v1h-2zM3 10h2v1h-2zM8 0h5v1h-5zM7 1h2v1h-2zM12 1h2v1h-2zM7 2h2v1h-2zM12 2h2v1h-2zM7 3h2v1h-2zM12 3h2v1h-2zM7 4h2v1h-2zM12 4h2v1h-2zM7 5h2v1h-2zM12 5h2v1h-2zM7 6h2v1h-2zM12 6h2v1h-2zM7 7h2v1h-2zM12 7h2v1h-2zM7 8h2v1h-2zM12 8h2v1h-2zM7 9h2v1h-2zM12 9h2v1h-2zM8 10h5v1h-5z" fill="#2a2a2a"/></svg>
<div style="left:770px;top:533px;width:48px;height:31.5px;background:#b9b9b9;border-radius:3px;box-shadow:inset 1px 1px 0 #c6c8ca;"></div>
<div style="left:773px;top:535px;width:21px;height:12px;background:#d6d6d6;border-top:1px solid #7a7a7a;border-left:1px solid #8a8a8a;border-bottom:1px solid #f4f4f4;"></div>
<div style="left:781px;top:542px;width:3px;height:1px;background:#000;"></div>
<div style="left:794px;top:535px;width:21px;height:12px;background:#d6d6d6;border-top:1px solid #7a7a7a;border-left:1px solid #8a8a8a;border-bottom:1px solid #f4f4f4;border-right:1px solid #eee;"></div>
<div style="left:802px;top:542px;width:3px;height:1px;background:#000;"></div>
<div style="left:773px;top:547px;width:42px;height:14px;background:#dadada;border-top:1px solid #7a7a7a;border-left:1px solid #8a8a8a;border-bottom:1px solid #f8f8f8;border-right:1px solid #eee;"></div>
<div style="left:308px;top:568px;width:205px;height:21.5px;background:#adadad;border-radius:3px;"></div>
<div style="left:312.5px;top:571.4px;width:124px;height:14.8px;background:#cecece;border-top:1px solid #888;border-left:1px solid #888;border-bottom:1px solid #f0f0f0;border-right:1px solid #e8e8e8;"></div>
<div class="t" style="left:328.8px;top:572.00px;font-size:14px;color:#333;font-weight:bold;transform:scaleX(0.96);transform-origin:left 50%;">DynamicMixer</div>
<div style="left:442.6px;top:571.4px;width:66.2px;height:14.8px;background:#cecece;border-top:1px solid #888;border-left:1px solid #888;border-bottom:1px solid #f0f0f0;border-right:1px solid #e8e8e8;"></div>
<div style="left:471.5px;top:579px;width:3px;height:1px;background:#000;"></div>
<div style="left:475.5px;top:579px;width:3px;height:1px;background:#000;"></div>
<div style="left:516px;top:568px;width:303px;height:21.5px;background:#a6a6a6;border-radius:3px;"></div>
<div style="left:819px;top:59px;width:2px;height:530px;background:#16191c;"></div>
<div style="left:825px;top:61px;width:50px;height:162px;background:#040404;border-radius:4px;"></div>
<div style="left:833px;top:68px;width:6px;height:3px;background:#521414;"></div>
<div style="left:864px;top:68px;width:6px;height:3px;background:#521414;"></div>
<div style="left:833px;top:74px;width:6px;height:3px;background:#6c5c32;"></div>
<div style="left:864px;top:74px;width:6px;height:3px;background:#6c5c32;"></div>
<div style="left:833px;top:80px;width:6px;height:3px;background:#6c5c32;"></div>
<div style="left:864px;top:80px;width:6px;height:3px;background:#6c5c32;"></div>
<div style="left:833px;top:86px;width:6px;height:3px;background:#6c5c32;"></div>
<div style="left:864px;top:86px;width:6px;height:3px;background:#6c5c32;"></div>
<div style="left:833px;top:92px;width:6px;height:3px;background:#6c5c32;"></div>
<div style="left:864px;top:92px;width:6px;height:3px;background:#6c5c32;"></div>
<div style="left:833px;top:98px;width:6px;height:3px;background:#6c5c32;"></div>
<div style="left:864px;top:98px;width:6px;height:3px;background:#6c5c32;"></div>
<div style="left:833px;top:104px;width:6px;height:3px;background:#6c5c32;"></div>
<div style="left:864px;top:104px;width:6px;height:3px;background:#6c5c32;"></div>
<div style="left:833px;top:110px;width:6px;height:3px;background:#18441a;"></div>
<div style="left:864px;top:110px;width:6px;height:3px;background:#18441a;"></div>
<div style="left:833px;top:116px;width:6px;height:3px;background:#18441a;"></div>
<div style="left:864px;top:116px;width:6px;height:3px;background:#18441a;"></div>
<div style="left:833px;top:122px;width:6px;height:3px;background:#18441a;"></div>
<div style="left:864px;top:122px;width:6px;height:3px;background:#18441a;"></div>
<div style="left:833px;top:128px;width:6px;height:3px;background:#18441a;"></div>
<div style="left:864px;top:128px;width:6px;height:3px;background:#18441a;"></div>
<div style="left:833px;top:134px;width:6px;height:3px;background:#18441a;"></div>
<div style="left:864px;top:134px;width:6px;height:3px;background:#18441a;"></div>
<div style="left:833px;top:140px;width:6px;height:3px;background:#18441a;"></div>
<div style="left:864px;top:140px;width:6px;height:3px;background:#18441a;"></div>
<div style="left:833px;top:146px;width:6px;height:3px;background:#18441a;"></div>
<div style="left:864px;top:146px;width:6px;height:3px;background:#18441a;"></div>
<div style="left:833px;top:152px;width:6px;height:3px;background:#18441a;"></div>
<div style="left:864px;top:152px;width:6px;height:3px;background:#18441a;"></div>
<div style="left:833px;top:158px;width:6px;height:3px;background:#18441a;"></div>
<div style="left:864px;top:158px;width:6px;height:3px;background:#18441a;"></div>
<div style="left:833px;top:164px;width:6px;height:3px;background:#18441a;"></div>
<div style="left:864px;top:164px;width:6px;height:3px;background:#18441a;"></div>
<div style="left:833px;top:170px;width:6px;height:3px;background:#18441a;"></div>
<div style="left:864px;top:170px;width:6px;height:3px;background:#18441a;"></div>
<div style="left:833px;top:176px;width:6px;height:3px;background:#18441a;"></div>
<div style="left:864px;top:176px;width:6px;height:3px;background:#18441a;"></div>
<div style="left:833px;top:182px;width:6px;height:3px;background:#18441a;"></div>
<div style="left:864px;top:182px;width:6px;height:3px;background:#18441a;"></div>
<div style="left:833px;top:188px;width:6px;height:3px;background:#18441a;"></div>
<div style="left:864px;top:188px;width:6px;height:3px;background:#18441a;"></div>
<div class="t" style="left:843px;top:63.00px;font-size:9.6px;color:#c84c4c;transform:scaleX(0.98);transform-origin:left 50%;">over</div>
<div class="t" style="left:836px;top:73.00px;font-size:9.2px;color:#b4b4b4;width:30px;text-align:center;transform:scaleX(0.85);transform-origin:center 50%;">0</div>
<div class="t" style="left:836px;top:84.00px;font-size:9.2px;color:#b4b4b4;width:30px;text-align:center;transform:scaleX(0.85);transform-origin:center 50%;">4</div>
<div class="t" style="left:836px;top:92.00px;font-size:9.2px;color:#b4b4b4;width:30px;text-align:center;transform:scaleX(0.85);transform-origin:center 50%;">6</div>
<div class="t" style="left:836px;top:109.00px;font-size:9.2px;color:#b4b4b4;width:30px;text-align:center;transform:scaleX(0.85);transform-origin:center 50%;">10</div>
<div class="t" style="left:836px;top:126.00px;font-size:9.2px;color:#b4b4b4;width:30px;text-align:center;transform:scaleX(0.85);transform-origin:center 50%;">20</div>
<div class="t" style="left:836px;top:145.00px;font-size:9.2px;color:#b4b4b4;width:30px;text-align:center;transform:scaleX(0.85);transform-origin:center 50%;">30</div>
<div class="t" style="left:836px;top:156.00px;font-size:9.2px;color:#b4b4b4;width:30px;text-align:center;transform:scaleX(0.85);transform-origin:center 50%;">40</div>
<div class="t" style="left:836px;top:169.00px;font-size:9.2px;color:#b4b4b4;width:30px;text-align:center;transform:scaleX(0.85);transform-origin:center 50%;">50</div>
<div class="t" style="left:836px;top:180.00px;font-size:9.2px;color:#b4b4b4;width:30px;text-align:center;transform:scaleX(0.85);transform-origin:center 50%;">60</div>
<div class="t" style="left:836.5px;top:185.00px;font-size:13px;color:#b4b4b4;width:30px;text-align:center;transform:scaleX(0.95);transform-origin:center 50%;">&#8734;</div>
<div style="left:835px;top:204px;width:2px;height:1px;background:#c86060;"></div>
<div style="left:838px;top:204px;width:2px;height:1px;background:#c86060;"></div>
<div style="left:859px;top:204px;width:2px;height:1px;background:#c86060;"></div>
<div style="left:862px;top:204px;width:2px;height:1px;background:#c86060;"></div>
<div style="left:844.5px;top:209.2px;width:12.5px;height:11.5px;background:linear-gradient(135deg,#e0e0e0,#a0a0a0);border:1px solid #1a1a1a;border-top-color:#666;border-left-color:#666;border-radius:2px;"></div>
<div style="left:831.5px;top:231.3px;width:17.8px;height:16.3px;background:#bcbcbc;border:2px solid #141414;border-radius:3px;box-shadow:inset 1px 1px 0 #e8e8e8, inset -1px -1px 0 #6a6a6a;"></div>
<div class="t" style="left:831.5px;top:235.00px;font-size:11.9px;color:#2a2a2a;font-weight:bold;width:17.8px;text-align:center;">M</div>
<svg style="position:absolute;left:854.5px;top:233px;overflow:visible" width="15" height="15"><g fill="#3a4047" stroke="#c4c4c4" stroke-width="1"><rect x="5.5" y="0.5" width="8.5" height="9"/><rect x="3.5" y="2.5" width="8.5" height="9"/><rect x="1" y="4.5" width="9" height="10"/></g><path d="M2.5 7.5H8.5 M2.5 9.5H8.5 M2.5 11.5H8.5" stroke="#c4c4c4"/></svg>
<div style="left:834px;top:262px;width:13.5px;height:13px;background:linear-gradient(135deg,#d8d8d8,#a8a8a8);border:2px solid #0c0c0c;border-radius:3px;box-shadow:inset 1px 1px 0 #8a8a8a;"></div>
<div style="left:857px;top:262px;width:13.5px;height:13px;background:linear-gradient(135deg,#d8d8d8,#a8a8a8);border:2px solid #0c0c0c;border-radius:3px;box-shadow:inset 1px 1px 0 #8a8a8a;"></div>
<div class="t" style="left:830px;top:282.00px;font-size:11px;color:#d0d0d0;transform:scaleX(0.8);transform-origin:left 50%;letter-spacing:0.9px;word-spacing:-1.5px;">6 dB</div>
<div class="t" style="left:857px;top:282.00px;font-size:11px;color:#c8c8c8;transform:scaleX(0.8);transform-origin:left 50%;letter-spacing:1.6px;">KS</div>
<div style="left:830.5px;top:307px;width:39.5px;height:13.5px;background:#e0e0e0;border-top:2px solid #050505;border-left:1px solid #050505;box-shadow:1px 1px 0 #5a5e62;"></div>
<div class="t" style="left:830.7px;top:310.00px;font-size:10.3px;color:#000;width:39px;text-align:center;">100</div>
<div style="left:830.5px;top:322.5px;width:39.5px;height:12.5px;background:#e0e0e0;border-top:2px solid #050505;border-left:1px solid #050505;box-shadow:1px 1px 0 #5a5e62;"></div>
<div class="t" style="left:830.7px;top:325.00px;font-size:10.3px;color:#000;width:39px;text-align:center;">0.0</div>
<div style="left:836px;top:348px;width:11px;height:1px;background:#d0d0d0;"></div>
<div style="left:855px;top:348px;width:11px;height:1px;background:#d0d0d0;"></div>
<div style="left:836px;top:364px;width:11px;height:1px;background:#d0d0d0;"></div>
<div style="left:855px;top:364px;width:11px;height:1px;background:#d0d0d0;"></div>
<div style="left:836px;top:378px;width:11px;height:1px;background:#d0d0d0;"></div>
<div style="left:855px;top:378px;width:11px;height:1px;background:#d0d0d0;"></div>
<div style="left:836px;top:393px;width:11px;height:1px;background:#d0d0d0;"></div>
<div style="left:855px;top:393px;width:11px;height:1px;background:#d0d0d0;"></div>
<div style="left:836px;top:408px;width:11px;height:1px;background:#d0d0d0;"></div>
<div style="left:855px;top:408px;width:11px;height:1px;background:#d0d0d0;"></div>
<div style="left:836px;top:436px;width:11px;height:1px;background:#d0d0d0;"></div>
<div style="left:855px;top:436px;width:11px;height:1px;background:#d0d0d0;"></div>
<div style="left:836px;top:462px;width:11px;height:1px;background:#d0d0d0;"></div>
<div style="left:855px;top:462px;width:11px;height:1px;background:#d0d0d0;"></div>
<div style="left:836px;top:482px;width:11px;height:1px;background:#d0d0d0;"></div>
<div style="left:855px;top:482px;width:11px;height:1px;background:#d0d0d0;"></div>
<div style="left:836px;top:499px;width:11px;height:1px;background:#d0d0d0;"></div>
<div style="left:855px;top:499px;width:11px;height:1px;background:#d0d0d0;"></div>
<div style="left:839px;top:367px;width:8px;height:1px;background:#b8b8b8;"></div>
<div style="left:855px;top:367px;width:8px;height:1px;background:#b8b8b8;"></div>
<div style="left:839px;top:370px;width:8px;height:1px;background:#b8b8b8;"></div>
<div style="left:855px;top:370px;width:8px;height:1px;background:#b8b8b8;"></div>
<div style="left:839px;top:373px;width:8px;height:1px;background:#b8b8b8;"></div>
<div style="left:855px;top:373px;width:8px;height:1px;background:#b8b8b8;"></div>
<div style="left:839px;top:375px;width:8px;height:1px;background:#b8b8b8;"></div>
<div style="left:855px;top:375px;width:8px;height:1px;background:#b8b8b8;"></div>
<div style="left:839px;top:381px;width:8px;height:1px;background:#b8b8b8;"></div>
<div style="left:855px;top:381px;width:8px;height:1px;background:#b8b8b8;"></div>
<div style="left:839px;top:384px;width:8px;height:1px;background:#b8b8b8;"></div>
<div style="left:855px;top:384px;width:8px;height:1px;background:#b8b8b8;"></div>
<div style="left:839px;top:387px;width:8px;height:1px;background:#b8b8b8;"></div>
<div style="left:855px;top:387px;width:8px;height:1px;background:#b8b8b8;"></div>
<div style="left:839px;top:390px;width:8px;height:1px;background:#b8b8b8;"></div>
<div style="left:855px;top:390px;width:8px;height:1px;background:#b8b8b8;"></div>
<div class="t" style="left:829.5px;top:374.00px;font-size:9.5px;color:#c8c8c8;transform:scaleX(0.85);transform-origin:left 50%;">0</div>
<div class="t" style="left:867.5px;top:374.00px;font-size:9.5px;color:#c8c8c8;transform:scaleX(0.85);transform-origin:left 50%;">0</div>
<div style="left:849px;top:343px;width:3px;height:159px;background:#080808;"></div>
<div style="left:852px;top:343px;width:1px;height:159px;background:#7a7e84;"></div>
<div style="left:842px;top:361px;width:17px;height:35px;background:#000;"></div>
<svg style="position:absolute;left:842px;top:361px;overflow:visible" width="17" height="35"><path d="M3.6 5.9 H13.2 C15.9 11 15.9 24 13.2 29.4 H3.6 C0.9 24 0.9 11 3.6 5.9Z" fill="url(#cap)"/><path d="M1.5 29.4 H15.5 L16.5 34.5 H0.5Z" fill="#1a1a1a"/></svg>
<div class="t" style="left:826.5px;top:509.00px;font-size:15.5px;color:#f0f0f0;font-weight:bold;width:50px;text-align:center;transform:scaleX(0.98);transform-origin:center 50%;">Mix</div>
<div style="left:829px;top:535px;width:8px;height:17px;background:#8a8a8a;border:1.5px solid #0a0a0a;border-radius:2px;box-shadow:inset 1px 0 0 #6a6a6a;"></div>
<div style="left:866px;top:535px;width:8px;height:17px;background:#8a8a8a;border:1.5px solid #0a0a0a;border-radius:2px;box-shadow:inset 1px 0 0 #6a6a6a;"></div>
<div style="left:837px;top:536.5px;width:29px;height:14px;background:#e8e8e8;border-top:1px solid #111;border-bottom:1px solid #f8f8f8;"></div>
<svg style="position:absolute;left:844px;top:538px" width="16" height="11" shape-rendering="crispEdges"><path d="M3 0h2v1h-2zM2 1h3v1h-3zM1 2h4v1h-4zM0 3h2v1h-2zM3 3h2v1h-2zM3 4h2v1h-2zM3 5h2v1h-2zM3 6h2v1h-2zM3 7h2v1h-2zM3 8h2v1h-2zM3 9h2v1h-2zM3 10h2v1h-2zM8 0h5v1h-5zM7 1h2v1h-2zM12 1h2v1h-2zM7 2h2v1h-2zM12 2h2v1h-2zM7 3h2v1h-2zM12 3h2v1h-2zM7 4h2v1h-2zM12 4h2v1h-2zM7 5h2v1h-2zM12 5h2v1h-2zM7 6h2v1h-2zM12 6h2v1h-2zM7 7h2v1h-2zM12 7h2v1h-2zM7 8h2v1h-2zM12 8h2v1h-2zM7 9h2v1h-2zM12 9h2v1h-2zM8 10h5v1h-5z" fill="#0c0c0c"/></svg>
<svg style="position:absolute;left:847px;top:553px;overflow:visible" width="11" height="11"><defs><radialGradient id="led" cx="0.4" cy="0.35" r="0.7"><stop offset="0" stop-color="#e08a40"/><stop offset="0.6" stop-color="#a04a10"/><stop offset="1" stop-color="#582408"/></radialGradient></defs><circle cx="5" cy="5" r="4.2" fill="url(#led)"/><path d="M4 9.5 Q6 10 7.5 8" stroke="#7a8088" stroke-width="1.2" fill="none"/></svg>
<div style="left:827px;top:568.2px;width:48.5px;height:18.2px;background:#5a6169;border-radius:3px;"></div>
<div style="left:832.5px;top:571.5px;width:37px;height:13px;background:#e8e8e8;border-top:1px solid #555;border-left:1px solid #666;"></div>
<div class="t" style="left:832.5px;top:573.00px;font-size:10.8px;color:#000;width:37px;text-align:center;transform:scaleX(0.92);transform-origin:center 50%;">Omni</div>
</div></body></html>
